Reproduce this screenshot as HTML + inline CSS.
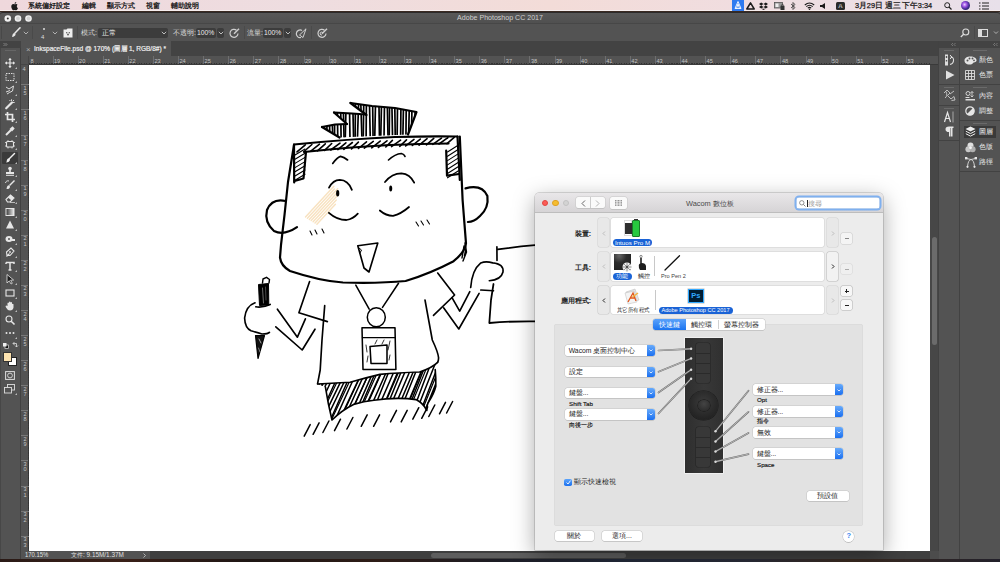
<!DOCTYPE html>
<html><head><meta charset="utf-8">
<style>
*{margin:0;padding:0;box-sizing:border-box}
html,body{width:1000px;height:562px;overflow:hidden;background:#3a2a22}
body{position:relative;font-family:"Liberation Sans",sans-serif;}
.a{position:absolute}
.t{position:absolute;white-space:nowrap}
svg{position:absolute;overflow:visible}
#menubar{left:0;top:0;width:1000px;height:11px;background:linear-gradient(90deg,#efd8dc 0%,#eedde0 30%,#f3dcd8 55%,#f0dde0 75%,#e8e0ea 100%);font-size:7.4px;color:#111;line-height:11px;border-bottom:1px solid #f6eeee;-webkit-text-stroke:0.25px #111}
#ps{left:0;top:12px;width:1000px;height:547px;background:#535353}
#title{left:0;top:12px;width:1000px;height:11px;background:linear-gradient(180deg,#585858,#505050);border-radius:3px 3px 0 0;border-top:1px solid #2c2a2a;color:#d0d0d0;font-size:7.05px;line-height:10px;text-align:center}
#opts{left:0;top:23px;width:1000px;height:18px;background:#535353;border-top:1px solid #474747}
#tabbar{left:21px;top:41px;width:917px;height:15px;background:#434343}
#tab{left:21px;top:41px;width:150px;height:15px;background:#535353;color:#e6e6e6;font-size:7.4px;line-height:15px}
#hruler{left:21px;top:56px;width:917px;height:9px;background:#535353;border-bottom:1px solid #3a3a3a}
#vruler{left:21px;top:56px;width:8px;height:495px;background:#535353;border-right:1px solid #3a3a3a}
#toolbar{left:0;top:41px;width:21px;height:518px;background:#535353;border-left:1px solid #474747;border-right:1px solid #404040}
#tbhead{left:0;top:41px;width:21px;height:7px;background:#434343}
#canvas{left:29px;top:65px;width:901px;height:486px;background:#fff;overflow:hidden}
#vscroll{left:930px;top:65px;width:9px;height:486px;background:#474747}
#status{left:21px;top:551px;width:917px;height:8px;background:#3f3f3f;font-size:6.4px;color:#e0e0e0;line-height:8px}
#panelstrip{left:938px;top:41px;width:62px;height:518px;background:#424242}
.pg{position:absolute;background:#535353}
.grip{position:absolute;height:1px;background:#6a6a6a}
.pl{position:absolute;font-size:6.5px;color:#e8e8e8;line-height:8px}
.rl{position:absolute;font-size:5.6px;color:#c4c4c4;line-height:6px}
#desk{left:0;top:559px;width:1000px;height:3px;background:linear-gradient(90deg,#2a1a16 0%,#3a2018 12%,#1e1614 25%,#2e1c16 38%,#1c1c24 50%,#232a3a 62%,#2a2c38 75%,#3a2a20 85%,#22202a 100%)}
.ob{position:absolute;background:#3c3c3c;border-radius:2px;color:#e8e8e8;font-size:7px;line-height:10px}
.ol{position:absolute;font-size:7px;color:#dcdcdc;line-height:10px;white-space:nowrap}

</style></head><body>
<div class="a" id="desk"></div>
<div class="a" id="ps"></div>
<div class="a" id="menubar">
 <svg style="left:11px;top:1.5px" width="7" height="8" viewBox="0 0 14 16"><path d="M11.6 8.5c0-2 1.6-2.9 1.7-3-1-1.4-2.4-1.5-2.9-1.6-1.2-.1-2.4.7-3 .7-.6 0-1.6-.7-2.6-.7C3.400 4 2 4.800 1.300 6.100c-1.500 2.600-.4 6.400 1 8.500.7 1 1.500 2.100 2.600 2.100 1 0 1.400-.7 2.700-.7 1.200 0 1.600.7 2.700.6 1.100 0 1.800-1 2.500-2.100.8-1.200 1.100-2.300 1.100-2.400 0 0-2.200-.8-2.300-3.600zM9.600 2.400c.6-.7 1-1.700.9-2.600-.8 0-1.800.5-2.400 1.200-.5.600-1 1.600-.9 2.500.9.1 1.800-.4 2.400-1.100z" fill="#1a1a1a"/></svg>
 <span class="t" style="left:28px">系統偏好設定</span>
 <span class="t" style="left:82px">編輯</span>
 <span class="t" style="left:107px">顯示方式</span>
 <span class="t" style="left:146px">視窗</span>
 <span class="t" style="left:171px">輔助說明</span>
 <div class="a" style="left:732px;top:0;width:12px;height:11px;background:#2f7bf0"></div>
 <svg style="left:734px;top:1px" width="8" height="9" viewBox="0 0 8 9"><path d="M4 0.5 L7 7.5 L1 7.5 Z M4 3 L5.5 7.5 M4 3 L2.5 7.5" stroke="#fff" stroke-width="0.9" fill="none"/></svg>
 <svg style="left:746px;top:2px" width="9" height="8" viewBox="0 0 9 8"><path d="M4.5 0.8 L8.2 7 L0.8 7 Z" stroke="#1a1a1a" stroke-width="1.5" fill="none" stroke-linejoin="round"/></svg>
 <svg style="left:759px;top:1.5px" width="9" height="8" viewBox="0 0 9 8"><path d="M2.2 0.5 L4.5 2 L2.2 3.5 L0 2 Z M6.8 0.5 L9 2 L6.8 3.5 L4.5 2 Z M2.2 3.5 L4.5 5 L6.8 3.5 L9 5 L6.8 6.5 L4.5 5 L2.2 6.5 L0 5Z M2.5 6.8 L4.5 8 L6.5 6.8" fill="#1a1a1a"/></svg>
 <svg style="left:774px;top:2px" width="11" height="8" viewBox="0 0 11 8"><rect x="0.5" y="0.5" width="8" height="5.5" fill="#999" stroke="#555" stroke-width="0.8"/><rect x="1.5" y="1.5" width="3" height="3.5" fill="#eee"/><rect x="6.5" y="4" width="4" height="4" fill="#333"/><path d="M7.3 4 V3 Q8.5 1.8 9.7 3 V4" stroke="#333" stroke-width="0.7" fill="none"/></svg>
 <svg style="left:790px;top:1.5px" width="6" height="8" viewBox="0 0 6 8"><path d="M1 2 L5 5.5 L3 7.5 L3 0.5 L5 2.5 L1 6" stroke="#333" stroke-width="0.8" fill="none"/></svg>
 <svg style="left:804px;top:2px" width="11" height="8" viewBox="0 0 11 8"><path d="M0.8 3 Q5.5 -1 10.2 3 M2.3 4.6 Q5.5 1.8 8.7 4.6 M3.8 6.1 Q5.5 4.6 7.2 6.1" stroke="#1a1a1a" stroke-width="1.1" fill="none"/><circle cx="5.5" cy="7.3" r="0.8" fill="#1a1a1a"/></svg>
 <svg style="left:820px;top:2.5px" width="6" height="6" viewBox="0 0 6 6"><path d="M0 2 L2 2 L5 0 L5 6 L2 4 L0 4Z" fill="#1a1a1a"/></svg>
 <div class="a" style="left:836px;top:1.5px;width:9px;height:8px;background:#2a2a2a;border-radius:1.5px;color:#fff;font-size:6px;line-height:8px;text-align:center;font-weight:bold">A</div>
 <span class="t" style="left:855px;font-size:7.6px;color:#222;transform:scaleX(0.968);transform-origin:0 50%">3月29日 週三 下午3:34</span>
 <svg style="left:944px;top:2px" width="8" height="8" viewBox="0 0 8 8"><circle cx="3.2" cy="3.2" r="2.5" stroke="#222" stroke-width="1" fill="none"/><path d="M5 5 L7.5 7.5" stroke="#222" stroke-width="1.2"/></svg>
 <div class="a" style="left:961px;top:1px;width:9px;height:9px;border-radius:50%;background:radial-gradient(circle at 40% 40%,#e9d0ff 0%,#9a50e0 30%,#3a2a8a 60%,#101040 100%)"></div>
 <svg style="left:979px;top:2px" width="10" height="8" viewBox="0 0 10 8"><path d="M0 1h1.5M0 4h1.5M0 7h1.5M3 1h7M3 4h7M3 7h7" stroke="#222" stroke-width="1.1"/></svg>
</div>
<div class="a" id="title">
 <svg style="left:2px;top:2.1px" width="35" height="8" viewBox="0 0 35 8"><circle cx="5.8" cy="3.5" r="3.3" fill="#f2f2f2"/><circle cx="5.8" cy="3.5" r="1" fill="#333"/><circle cx="16" cy="3.5" r="3.3" fill="#f0f0f0"/><circle cx="16" cy="3.5" r="1.9" fill="#d4d4d4"/><circle cx="26.5" cy="3.5" r="3.3" fill="#f0f0f0"/><circle cx="26.5" cy="3.5" r="1.9" fill="#d4d4d4"/></svg>
 Adobe Photoshop CC 2017</div>
<div class="a" id="opts">
 <div class="a" style="left:1px;top:2px;width:1px;height:13px;background:#484848"></div>
 <svg style="left:11px;top:3px" width="10" height="11" viewBox="0 0 10 11"><path d="M9 0.8 L4 6" stroke="#e8e8e8" stroke-width="1.6" stroke-linecap="round"/><path d="M3.6 6 C2 6 1.5 7.5 1.2 9.5 L1 10 C3 9.6 4.6 9 4.6 7 Z" fill="#e8e8e8"/></svg>
 <svg style="left:23px;top:7px" width="6" height="4" viewBox="0 0 6 4"><path d="M0.8 0.8 L3 3 L5.2 0.8" stroke="#bbb" stroke-width="0.9" fill="none"/></svg>
 <div class="a" style="left:32px;top:2px;width:1px;height:13px;background:#4a4a4a"></div>
 <div class="a" style="left:43px;top:4px;width:2px;height:2px;background:#ddd;border-radius:1px"></div>
 <span class="ol" style="left:41px;top:8px;font-size:6px">4</span>
 <svg style="left:52px;top:7px" width="6" height="4" viewBox="0 0 6 4"><path d="M0.8 0.8 L3 3 L5.2 0.8" stroke="#bbb" stroke-width="0.9" fill="none"/></svg>
 <svg style="left:63px;top:3.5px" width="10" height="10" viewBox="0 0 10 10"><path d="M0.5 1.5 L3.5 1.5 L4.5 0.5 L9.5 0.5 L9.5 9.5 L0.5 9.5Z" fill="#eee"/><path d="M3 4 L7 4 L5 8 Z" fill="#444"/><circle cx="5" cy="5" r="1" fill="#eee"/></svg>
 <div class="a" style="left:77px;top:2px;width:1px;height:13px;background:#4a4a4a"></div>
 <span class="ol" style="left:81px;top:3.5px">模式:</span>
 <div class="ob" style="left:98px;top:4px;width:70px;height:10px;padding-left:4px">正常
  <svg style="left:63px;top:3px" width="6" height="4" viewBox="0 0 6 4"><path d="M0.8 0.8 L3 3 L5.2 0.8" stroke="#ccc" stroke-width="0.9" fill="none"/></svg></div>
 <span class="ol" style="left:173px;top:3.5px">不透明:</span>
 <div class="ob" style="left:196px;top:4px;width:20px;height:10px;padding-left:1px;font-size:6.8px">100%</div>
 <div class="ob" style="left:217px;top:4px;width:7px;height:10px"><svg style="left:0.5px;top:3px" width="6" height="4" viewBox="0 0 6 4"><path d="M0.8 0.8 L3 3 L5.2 0.8" stroke="#ccc" stroke-width="0.9" fill="none"/></svg></div>
 <svg style="left:229px;top:3.5px" width="11" height="11" viewBox="0 0 11 11"><path d="M7.5 2.2 A4 4 0 1 0 9 5.5" stroke="#cfcfcf" stroke-width="1.2" fill="none"/><path d="M10 0.8 L5 5.8" stroke="#cfcfcf" stroke-width="1.4"/></svg>
 <div class="a" style="left:244px;top:2px;width:1px;height:13px;background:#4a4a4a"></div>
 <span class="ol" style="left:247px;top:3.5px">流量:</span>
 <div class="ob" style="left:263px;top:4px;width:20px;height:10px;padding-left:1px;font-size:6.8px">100%</div>
 <div class="ob" style="left:284px;top:4px;width:7px;height:10px"><svg style="left:0.5px;top:3px" width="6" height="4" viewBox="0 0 6 4"><path d="M0.8 0.8 L3 3 L5.2 0.8" stroke="#ccc" stroke-width="0.9" fill="none"/></svg></div>
 <svg style="left:296px;top:3.5px" width="11" height="11" viewBox="0 0 11 11"><path d="M6 2.5 A3.8 3.8 0 1 0 5 9.5" stroke="#cfcfcf" stroke-width="1.2" fill="none"/><path d="M10 0.8 L3.5 7 L7 9.5 Z" stroke="#cfcfcf" stroke-width="1" fill="none"/></svg>
 <div class="a" style="left:311px;top:2px;width:1px;height:13px;background:#4a4a4a"></div>
 <svg style="left:317px;top:3.5px" width="11" height="11" viewBox="0 0 11 11"><path d="M7.5 2.2 A4 4 0 1 0 9 5.5" stroke="#cfcfcf" stroke-width="1.2" fill="none"/><path d="M6 5 A1.5 1.5 0 1 0 5 7" stroke="#cfcfcf" stroke-width="1" fill="none"/><path d="M10 0.8 L5 5.8" stroke="#cfcfcf" stroke-width="1.4"/></svg>
 <svg style="left:960px;top:4px" width="10" height="10" viewBox="0 0 10 10"><circle cx="5.8" cy="4" r="3" stroke="#ddd" stroke-width="1.1" fill="none"/><path d="M3.6 6.2 L0.8 9" stroke="#ddd" stroke-width="1.3"/></svg>
 <div class="a" style="left:974px;top:2px;width:1px;height:13px;background:#4a4a4a"></div>
 <svg style="left:978px;top:5px" width="22" height="8" viewBox="0 0 22 8"><rect x="0.5" y="0.5" width="9" height="7" stroke="#ddd" stroke-width="1" fill="none"/><rect x="1" y="1" width="3" height="6" fill="#ddd"/><path d="M16 2.5 L18 4.5 L20 2.5" stroke="#bbb" stroke-width="0.9" fill="none"/></svg>
</div>
<div class="a" id="tabbar"></div>
<div class="a" id="tab"><span class="t" style="left:5px;top:1px;color:#aaa;font-size:8px">×</span><span class="t" style="left:13px;top:1px;font-size:7.1px;color:#f0f0f0;-webkit-text-stroke:0.2px #f0f0f0;transform:scaleX(0.923);transform-origin:0 50%">InkspaceFile.psd @ 170% (圖層 1, RGB/8#) *</span></div>
<div class="a" id="toolbar"></div>
<div class="a" id="tbhead"><svg style="left:3px;top:2px" width="5" height="3" viewBox="0 0 5 3"><path d="M0.5 0 L2 1.5 L0.5 3 M2.5 0 L4 1.5 L2.5 3" stroke="#aaa" stroke-width="0.6" fill="none"/></svg></div>
<div class="a" style="left:5px;top:50px;width:11px;height:1px;background:#666"></div>
<div class="a" id="hruler"></div>
<div class="a" id="vruler"></div>
<div class="a" id="vscroll"><div class="a" style="left:2px;top:172px;width:5px;height:108px;background:#6b6b6b;border-radius:3px"></div></div>
<div class="a" id="status">
 <div class="a" style="left:0;top:0;width:29px;height:8px;background:#535353"></div>
 <span class="t" style="left:4px;transform:scaleX(0.92);transform-origin:0 50%">170.15%</span>
 <div class="a" style="left:29px;top:0;width:100px;height:8px;background:#535353"></div>
 <span class="t" style="left:50px">文件: 9.15M/1.37M</span>
 <svg style="left:122px;top:2px" width="3" height="5" viewBox="0 0 3 5"><path d="M0.5 0.5 L2.5 2.5 L0.5 4.5" stroke="#ccc" stroke-width="0.8" fill="none"/></svg>
 <div class="a" style="left:410px;top:1.5px;width:195px;height:5px;background:#5e5e5e;border-radius:3px"></div>
</div>
<div class="a" id="panelstrip"></div>
<div class="a" style="left:52.5px;top:56px;width:1px;height:8px;background:#6e6e6e"></div>
<span class="rl" style="left:54.0px;top:58px">19</span>
<div class="a" style="left:77.6px;top:56px;width:1px;height:8px;background:#6e6e6e"></div>
<span class="rl" style="left:79.1px;top:58px">20</span>
<div class="a" style="left:102.7px;top:56px;width:1px;height:8px;background:#6e6e6e"></div>
<span class="rl" style="left:104.2px;top:58px">21</span>
<div class="a" style="left:127.8px;top:56px;width:1px;height:8px;background:#6e6e6e"></div>
<span class="rl" style="left:129.3px;top:58px">22</span>
<div class="a" style="left:152.9px;top:56px;width:1px;height:8px;background:#6e6e6e"></div>
<span class="rl" style="left:154.4px;top:58px">23</span>
<div class="a" style="left:178.0px;top:56px;width:1px;height:8px;background:#6e6e6e"></div>
<span class="rl" style="left:179.5px;top:58px">24</span>
<div class="a" style="left:203.1px;top:56px;width:1px;height:8px;background:#6e6e6e"></div>
<span class="rl" style="left:204.6px;top:58px">25</span>
<div class="a" style="left:228.2px;top:56px;width:1px;height:8px;background:#6e6e6e"></div>
<span class="rl" style="left:229.7px;top:58px">26</span>
<div class="a" style="left:253.3px;top:56px;width:1px;height:8px;background:#6e6e6e"></div>
<span class="rl" style="left:254.8px;top:58px">27</span>
<div class="a" style="left:278.4px;top:56px;width:1px;height:8px;background:#6e6e6e"></div>
<span class="rl" style="left:279.9px;top:58px">28</span>
<div class="a" style="left:303.5px;top:56px;width:1px;height:8px;background:#6e6e6e"></div>
<span class="rl" style="left:305.0px;top:58px">29</span>
<div class="a" style="left:328.6px;top:56px;width:1px;height:8px;background:#6e6e6e"></div>
<span class="rl" style="left:330.1px;top:58px">30</span>
<div class="a" style="left:353.7px;top:56px;width:1px;height:8px;background:#6e6e6e"></div>
<span class="rl" style="left:355.2px;top:58px">31</span>
<div class="a" style="left:378.8px;top:56px;width:1px;height:8px;background:#6e6e6e"></div>
<span class="rl" style="left:380.3px;top:58px">32</span>
<div class="a" style="left:403.9px;top:56px;width:1px;height:8px;background:#6e6e6e"></div>
<span class="rl" style="left:405.4px;top:58px">33</span>
<div class="a" style="left:429.0px;top:56px;width:1px;height:8px;background:#6e6e6e"></div>
<span class="rl" style="left:430.5px;top:58px">34</span>
<div class="a" style="left:454.1px;top:56px;width:1px;height:8px;background:#6e6e6e"></div>
<span class="rl" style="left:455.6px;top:58px">35</span>
<div class="a" style="left:479.2px;top:56px;width:1px;height:8px;background:#6e6e6e"></div>
<span class="rl" style="left:480.7px;top:58px">36</span>
<div class="a" style="left:504.3px;top:56px;width:1px;height:8px;background:#6e6e6e"></div>
<span class="rl" style="left:505.8px;top:58px">37</span>
<div class="a" style="left:529.4px;top:56px;width:1px;height:8px;background:#6e6e6e"></div>
<span class="rl" style="left:530.9px;top:58px">38</span>
<div class="a" style="left:554.5px;top:56px;width:1px;height:8px;background:#6e6e6e"></div>
<span class="rl" style="left:556.0px;top:58px">39</span>
<div class="a" style="left:579.6px;top:56px;width:1px;height:8px;background:#6e6e6e"></div>
<span class="rl" style="left:581.1px;top:58px">40</span>
<div class="a" style="left:604.7px;top:56px;width:1px;height:8px;background:#6e6e6e"></div>
<span class="rl" style="left:606.2px;top:58px">41</span>
<div class="a" style="left:629.8px;top:56px;width:1px;height:8px;background:#6e6e6e"></div>
<span class="rl" style="left:631.3px;top:58px">42</span>
<div class="a" style="left:654.9px;top:56px;width:1px;height:8px;background:#6e6e6e"></div>
<span class="rl" style="left:656.4px;top:58px">43</span>
<div class="a" style="left:680.0px;top:56px;width:1px;height:8px;background:#6e6e6e"></div>
<span class="rl" style="left:681.5px;top:58px">44</span>
<div class="a" style="left:705.1px;top:56px;width:1px;height:8px;background:#6e6e6e"></div>
<span class="rl" style="left:706.6px;top:58px">45</span>
<div class="a" style="left:730.2px;top:56px;width:1px;height:8px;background:#6e6e6e"></div>
<span class="rl" style="left:731.7px;top:58px">46</span>
<div class="a" style="left:755.3px;top:56px;width:1px;height:8px;background:#6e6e6e"></div>
<span class="rl" style="left:756.8px;top:58px">47</span>
<div class="a" style="left:780.4px;top:56px;width:1px;height:8px;background:#6e6e6e"></div>
<span class="rl" style="left:781.9px;top:58px">48</span>
<div class="a" style="left:805.5px;top:56px;width:1px;height:8px;background:#6e6e6e"></div>
<span class="rl" style="left:807.0px;top:58px">49</span>
<div class="a" style="left:830.6px;top:56px;width:1px;height:8px;background:#6e6e6e"></div>
<span class="rl" style="left:832.1px;top:58px">50</span>
<div class="a" style="left:855.7px;top:56px;width:1px;height:8px;background:#6e6e6e"></div>
<span class="rl" style="left:857.2px;top:58px">51</span>
<div class="a" style="left:880.8px;top:56px;width:1px;height:8px;background:#6e6e6e"></div>
<span class="rl" style="left:882.3px;top:58px">52</span>
<div class="a" style="left:905.9px;top:56px;width:1px;height:8px;background:#6e6e6e"></div>
<span class="rl" style="left:907.4px;top:58px">53</span>
<span class="rl" style="left:30.5px;top:58px">8</span>
<div class="a" style="left:29px;top:63px;width:901px;height:1px;background:repeating-linear-gradient(90deg,#333 0 1px,transparent 1px 2.5px)"></div>
<span class="rl" style="left:22.5px;top:66px">4</span>
<div class="a" style="left:21px;top:84.4px;width:8px;height:1px;background:#777"></div>
<span class="rl" style="left:22.5px;top:85.9px;width:5px;line-height:5.5px;text-align:center">1<br>5</span>
<div class="a" style="left:21px;top:109.4px;width:8px;height:1px;background:#777"></div>
<span class="rl" style="left:22.5px;top:110.9px;width:5px;line-height:5.5px;text-align:center">1<br>6</span>
<div class="a" style="left:21px;top:134.5px;width:8px;height:1px;background:#777"></div>
<span class="rl" style="left:22.5px;top:136.0px;width:5px;line-height:5.5px;text-align:center">1<br>7</span>
<div class="a" style="left:21px;top:159.6px;width:8px;height:1px;background:#777"></div>
<span class="rl" style="left:22.5px;top:161.1px;width:5px;line-height:5.5px;text-align:center">1<br>8</span>
<div class="a" style="left:21px;top:184.6px;width:8px;height:1px;background:#777"></div>
<span class="rl" style="left:22.5px;top:186.1px;width:5px;line-height:5.5px;text-align:center">1<br>9</span>
<div class="a" style="left:21px;top:209.7px;width:8px;height:1px;background:#777"></div>
<span class="rl" style="left:22.5px;top:211.2px;width:5px;line-height:5.5px;text-align:center">2<br>0</span>
<div class="a" style="left:21px;top:234.8px;width:8px;height:1px;background:#777"></div>
<span class="rl" style="left:22.5px;top:236.3px;width:5px;line-height:5.5px;text-align:center">2<br>1</span>
<div class="a" style="left:21px;top:259.9px;width:8px;height:1px;background:#777"></div>
<span class="rl" style="left:22.5px;top:261.4px;width:5px;line-height:5.5px;text-align:center">2<br>2</span>
<div class="a" style="left:21px;top:284.9px;width:8px;height:1px;background:#777"></div>
<span class="rl" style="left:22.5px;top:286.4px;width:5px;line-height:5.5px;text-align:center">2<br>3</span>
<div class="a" style="left:21px;top:310.0px;width:8px;height:1px;background:#777"></div>
<span class="rl" style="left:22.5px;top:311.5px;width:5px;line-height:5.5px;text-align:center">2<br>4</span>
<div class="a" style="left:21px;top:335.1px;width:8px;height:1px;background:#777"></div>
<span class="rl" style="left:22.5px;top:336.6px;width:5px;line-height:5.5px;text-align:center">2<br>5</span>
<div class="a" style="left:21px;top:360.1px;width:8px;height:1px;background:#777"></div>
<span class="rl" style="left:22.5px;top:361.6px;width:5px;line-height:5.5px;text-align:center">2<br>6</span>
<div class="a" style="left:21px;top:385.2px;width:8px;height:1px;background:#777"></div>
<span class="rl" style="left:22.5px;top:386.7px;width:5px;line-height:5.5px;text-align:center">2<br>7</span>
<div class="a" style="left:21px;top:410.3px;width:8px;height:1px;background:#777"></div>
<span class="rl" style="left:22.5px;top:411.8px;width:5px;line-height:5.5px;text-align:center">2<br>8</span>
<div class="a" style="left:21px;top:435.3px;width:8px;height:1px;background:#777"></div>
<span class="rl" style="left:22.5px;top:436.8px;width:5px;line-height:5.5px;text-align:center">2<br>9</span>
<div class="a" style="left:21px;top:460.4px;width:8px;height:1px;background:#777"></div>
<span class="rl" style="left:22.5px;top:461.9px;width:5px;line-height:5.5px;text-align:center">3<br>0</span>
<div class="a" style="left:21px;top:485.5px;width:8px;height:1px;background:#777"></div>
<span class="rl" style="left:22.5px;top:487.0px;width:5px;line-height:5.5px;text-align:center">3<br>1</span>
<div class="a" style="left:21px;top:510.6px;width:8px;height:1px;background:#777"></div>
<span class="rl" style="left:22.5px;top:512.1px;width:5px;line-height:5.5px;text-align:center">3<br>2</span>
<div class="a" style="left:21px;top:535.6px;width:8px;height:1px;background:#777"></div>
<span class="rl" style="left:22.5px;top:537.1px;width:5px;line-height:5.5px;text-align:center">3<br>3</span>
<div class="a" style="left:28px;top:65px;width:1px;height:486px;background:repeating-linear-gradient(180deg,#333 0 1px,transparent 1px 2.5px)"></div>
<div class="a" style="left:21px;top:56px;width:8px;height:9px;background:#535353;border-right:1px solid #464646;border-bottom:1px solid #464646"></div><div class="a" style="left:2px;top:151.5px;width:16px;height:12px;background:#3a3a3a;border-radius:1px"></div>
<svg style="left:4.5px;top:58.0px" width="10" height="10" viewBox="0 0 10 10"><path d="M5 0.5 V9.5 M0.5 5 H9.5" stroke="#e6e6e6" stroke-width="1.2"/><path d="M5 0 L3.3 2 H6.7Z M5 10 L3.3 8 H6.7Z M0 5 L2 3.3 V6.7Z M10 5 L8 3.3 V6.7Z" fill="#e6e6e6"/></svg>
<svg style="left:15px;top:67.0px" width="2" height="2" viewBox="0 0 2 2"><path d="M2 0 V2 H0Z" fill="#bbb"/></svg>
<svg style="left:4.5px;top:71.5px" width="10" height="10" viewBox="0 0 10 10"><rect x="1" y="1.5" width="8" height="7" stroke="#ddd" stroke-width="1" stroke-dasharray="1.5 1" fill="none"/></svg>
<svg style="left:15px;top:80.5px" width="2" height="2" viewBox="0 0 2 2"><path d="M2 0 V2 H0Z" fill="#bbb"/></svg>
<svg style="left:4.5px;top:85.0px" width="10" height="10" viewBox="0 0 10 10"><path d="M1 2 L4 4 L8.5 1 L7.5 6 L4.5 7.5 L2 9 M1 7 L5 5.5" stroke="#ddd" stroke-width="1" fill="none"/></svg>
<svg style="left:15px;top:94.0px" width="2" height="2" viewBox="0 0 2 2"><path d="M2 0 V2 H0Z" fill="#bbb"/></svg>
<svg style="left:4.5px;top:98.5px" width="10" height="10" viewBox="0 0 10 10"><path d="M1.2 9.3 L7 3.5" stroke="#e6e6e6" stroke-width="2.2" stroke-linecap="round"/><path d="M6.5 0.3 V2 M9.7 3.5 H8 M4.5 1 L5.3 2 M9 1 L8 2" stroke="#e6e6e6" stroke-width="0.9"/></svg>
<svg style="left:15px;top:107.5px" width="2" height="2" viewBox="0 0 2 2"><path d="M2 0 V2 H0Z" fill="#bbb"/></svg>
<svg style="left:4.5px;top:112.0px" width="10" height="10" viewBox="0 0 10 10"><path d="M2.5 0 V7.5 H10 M0 2.5 H7.5 V10" stroke="#e6e6e6" stroke-width="1.7" fill="none"/></svg>
<svg style="left:15px;top:121.0px" width="2" height="2" viewBox="0 0 2 2"><path d="M2 0 V2 H0Z" fill="#bbb"/></svg>
<svg style="left:4.5px;top:125.5px" width="10" height="10" viewBox="0 0 10 10"><path d="M1 9 L6 4" stroke="#e6e6e6" stroke-width="2"/><path d="M4.5 3 L7.5 0.3 L9.7 2.5 L7 5.5Z" fill="#e6e6e6"/></svg>
<svg style="left:15px;top:134.5px" width="2" height="2" viewBox="0 0 2 2"><path d="M2 0 V2 H0Z" fill="#bbb"/></svg>
<svg style="left:4.5px;top:139.0px" width="10" height="10" viewBox="0 0 10 10"><rect x="1.5" y="2.5" width="7" height="5.5" rx="1" stroke="#e6e6e6" stroke-width="1.1" fill="none"/><path d="M0 3.5 H1.5 M0 7 H1.5 M8.5 3.5 H10 M8.5 7 H10 M3 1 V2.5 M7 1 V2.5 M3 8 V9.5 M7 8 V9.5" stroke="#e6e6e6" stroke-width="0.8"/></svg>
<svg style="left:15px;top:148.0px" width="2" height="2" viewBox="0 0 2 2"><path d="M2 0 V2 H0Z" fill="#bbb"/></svg>
<svg style="left:4.5px;top:152.5px" width="10" height="10" viewBox="0 0 10 10"><path d="M9.5 0.5 L4.5 5.5" stroke="#f0f0f0" stroke-width="1.5" stroke-linecap="round"/><path d="M4 5.3 C2.5 5.3 1.8 6.8 1.5 9 L1 9.6 C3.2 9.2 5 8.6 5 6.5Z" fill="#f0f0f0"/></svg>
<svg style="left:15px;top:161.5px" width="2" height="2" viewBox="0 0 2 2"><path d="M2 0 V2 H0Z" fill="#bbb"/></svg>
<svg style="left:4.5px;top:166.0px" width="10" height="10" viewBox="0 0 10 10"><circle cx="5" cy="2.5" r="1.8" fill="#e6e6e6"/><path d="M4.2 4 H5.8 V6 H9 V8 H1 V6 H4.2Z" fill="#e6e6e6"/><rect x="1" y="8.8" width="8" height="1" fill="#e6e6e6"/></svg>
<svg style="left:15px;top:175.0px" width="2" height="2" viewBox="0 0 2 2"><path d="M2 0 V2 H0Z" fill="#bbb"/></svg>
<svg style="left:4.5px;top:179.5px" width="10" height="10" viewBox="0 0 10 10"><path d="M9.5 0.5 L4.5 5.5" stroke="#e6e6e6" stroke-width="1.4"/><path d="M4 5.3 C2.5 5.3 1.8 6.8 1.5 9 C3.2 9.2 5 8.6 5 6.5Z" fill="#e6e6e6"/><path d="M0.5 3 A2.5 2.5 0 0 1 4 1" stroke="#e6e6e6" stroke-width="0.9" fill="none"/></svg>
<svg style="left:15px;top:188.5px" width="2" height="2" viewBox="0 0 2 2"><path d="M2 0 V2 H0Z" fill="#bbb"/></svg>
<svg style="left:4.5px;top:193.0px" width="10" height="10" viewBox="0 0 10 10"><path d="M1 6.5 L5.5 2 L9 5 L5 9 H2.5Z" stroke="#e6e6e6" stroke-width="1.1" fill="none"/><path d="M3 4.5 L6.5 7.5 L9 5 L5.5 2Z" fill="#e6e6e6"/><path d="M5 9.5 H10" stroke="#e6e6e6" stroke-width="0.7"/></svg>
<svg style="left:15px;top:202.0px" width="2" height="2" viewBox="0 0 2 2"><path d="M2 0 V2 H0Z" fill="#bbb"/></svg>
<svg style="left:4.5px;top:206.5px" width="10" height="10" viewBox="0 0 10 10"><defs><linearGradient id="gg"><stop offset="0" stop-color="#333"/><stop offset="1" stop-color="#eee"/></linearGradient></defs><rect x="1" y="1.5" width="8" height="7" fill="url(#gg)" stroke="#e6e6e6" stroke-width="1"/></svg>
<svg style="left:15px;top:215.5px" width="2" height="2" viewBox="0 0 2 2"><path d="M2 0 V2 H0Z" fill="#bbb"/></svg>
<svg style="left:4.5px;top:220.0px" width="10" height="10" viewBox="0 0 10 10"><path d="M5 0.5 L9 8.5 H1Z" fill="#e6e6e6"/></svg>
<svg style="left:15px;top:229.0px" width="2" height="2" viewBox="0 0 2 2"><path d="M2 0 V2 H0Z" fill="#bbb"/></svg>
<svg style="left:4.5px;top:233.5px" width="10" height="10" viewBox="0 0 10 10"><ellipse cx="4" cy="5" rx="3.5" ry="3" fill="#e6e6e6"/><path d="M7 5 H10 V7 H7" fill="#e6e6e6"/><circle cx="4" cy="5" r="1" fill="#535353"/></svg>
<svg style="left:15px;top:242.5px" width="2" height="2" viewBox="0 0 2 2"><path d="M2 0 V2 H0Z" fill="#bbb"/></svg>
<svg style="left:4.5px;top:247.0px" width="10" height="10" viewBox="0 0 10 10"><path d="M2 8.5 L1.5 5 L6 1 L9 4 L5 8.5Z M1.5 9.5 L4.5 6.5" stroke="#e6e6e6" stroke-width="1.1" fill="none"/><circle cx="5" cy="5" r="0.9" fill="#e6e6e6"/></svg>
<svg style="left:15px;top:256.0px" width="2" height="2" viewBox="0 0 2 2"><path d="M2 0 V2 H0Z" fill="#bbb"/></svg>
<svg style="left:4.5px;top:260.5px" width="10" height="10" viewBox="0 0 10 10"><path d="M1 1.5 H9 V3 M1 1.5 V3 M5 1.5 V9 M3.5 9 H6.5" stroke="#e6e6e6" stroke-width="1.5" fill="none"/></svg>
<svg style="left:15px;top:269.5px" width="2" height="2" viewBox="0 0 2 2"><path d="M2 0 V2 H0Z" fill="#bbb"/></svg>
<svg style="left:4.5px;top:274.0px" width="10" height="10" viewBox="0 0 10 10"><path d="M2 0.5 L2 9 L4.3 6.8 L6 10 L7.3 9.3 L5.6 6.2 L8.6 6Z" fill="#1e1e1e" stroke="#e6e6e6" stroke-width="0.8"/></svg>
<svg style="left:15px;top:283.0px" width="2" height="2" viewBox="0 0 2 2"><path d="M2 0 V2 H0Z" fill="#bbb"/></svg>
<svg style="left:4.5px;top:287.5px" width="10" height="10" viewBox="0 0 10 10"><rect x="1" y="2" width="8" height="6" stroke="#e6e6e6" stroke-width="1.1" fill="none"/></svg>
<svg style="left:15px;top:296.5px" width="2" height="2" viewBox="0 0 2 2"><path d="M2 0 V2 H0Z" fill="#bbb"/></svg>
<svg style="left:4.5px;top:301.0px" width="10" height="10" viewBox="0 0 10 10"><path d="M2.5 4 V2 Q3.2 1 4 2 V1 Q4.8 0 5.5 1 V1.5 Q6.3 0.6 7 1.6 V3 Q7.8 2.2 8.5 3.2 V6.5 Q8 9.5 5 9.5 Q2.5 9.5 1 6.5 L0.5 5 Q1.3 4 2.5 5Z" fill="#e6e6e6"/></svg>
<svg style="left:15px;top:310.0px" width="2" height="2" viewBox="0 0 2 2"><path d="M2 0 V2 H0Z" fill="#bbb"/></svg>
<svg style="left:4.5px;top:314.5px" width="10" height="10" viewBox="0 0 10 10"><circle cx="4" cy="4" r="3" stroke="#e6e6e6" stroke-width="1.1" fill="none"/><path d="M6.2 6.2 L9.5 9.5" stroke="#e6e6e6" stroke-width="1.6"/></svg>
<svg style="left:4.5px;top:328.0px" width="10" height="10" viewBox="0 0 10 10"><circle cx="1.5" cy="5" r="1" fill="#e6e6e6"/><circle cx="5" cy="5" r="1" fill="#e6e6e6"/><circle cx="8.5" cy="5" r="1" fill="#e6e6e6"/></svg>
<svg style="left:15px;top:337.0px" width="2" height="2" viewBox="0 0 2 2"><path d="M2 0 V2 H0Z" fill="#bbb"/></svg>
<svg style="left:2px;top:342px" width="18" height="8" viewBox="0 0 18 8"><rect x="3" y="3" width="3.5" height="3.5" fill="#111" stroke="#ddd" stroke-width="0.7"/><rect x="1" y="1" width="3.5" height="3.5" fill="#eee"/><path d="M11 1.5 H14.5 V5 M12.5 0 L11 1.5 L12.5 3 M13 3.5 L14.5 5 L16 3.5" stroke="#ddd" stroke-width="0.8" fill="none"/></svg>
<div class="a" style="left:8px;top:356.5px;width:9px;height:9.5px;background:#fff;border:0.5px solid #222"></div>
<div class="a" style="left:2.5px;top:352px;width:9px;height:9.5px;background:#fde3b0;border:0.5px solid #333"></div>
<svg style="left:4.5px;top:371px" width="10" height="9" viewBox="0 0 10 9"><rect x="0.6" y="0.6" width="8.8" height="7.8" stroke="#ddd" stroke-width="1" fill="none"/><circle cx="5" cy="4.5" r="2.4" stroke="#ddd" stroke-width="0.9" fill="none"/></svg>
<svg style="left:4px;top:384px" width="12" height="10" viewBox="0 0 12 10"><rect x="3.5" y="0.5" width="7" height="5.5" stroke="#ddd" stroke-width="0.9" fill="none"/><rect x="0.5" y="3.5" width="7" height="5.5" fill="#535353" stroke="#ddd" stroke-width="0.9"/></svg>
<svg style="left:15px;top:393px" width="2" height="2" viewBox="0 0 2 2"><path d="M2 0 V2 H0Z" fill="#bbb"/></svg><div class="a" style="left:939px;top:41px;width:61px;height:7px;background:#434343"></div>
<svg style="left:951px;top:43px" width="5" height="3" viewBox="0 0 5 3"><path d="M2 0 L0.5 1.5 L2 3 M4.5 0 L3 1.5 L4.5 3" stroke="#999" stroke-width="0.6" fill="none"/></svg>
<svg style="left:993px;top:43px" width="5" height="3" viewBox="0 0 5 3"><path d="M2 0 L0.5 1.5 L2 3 M4.5 0 L3 1.5 L4.5 3" stroke="#999" stroke-width="0.6" fill="none"/></svg>
<div class="pg" style="left:939px;top:48px;width:20px;height:35.5px"></div>
<div class="pg" style="left:939px;top:84.5px;width:20px;height:20.5px"></div>
<div class="pg" style="left:939px;top:106px;width:20px;height:34px"></div>
<div class="pg" style="left:939px;top:141px;width:20px;height:418px"></div>
<div class="pg" style="left:960px;top:48px;width:40px;height:35.5px"></div>
<div class="pg" style="left:960px;top:84.5px;width:40px;height:35.5px"></div>
<div class="pg" style="left:960px;top:121px;width:40px;height:50px"></div>
<div class="pg" style="left:960px;top:172px;width:40px;height:387px"></div>
<div class="grip" style="left:944px;top:50px;width:10px"></div>
<div class="grip" style="left:944px;top:86.5px;width:10px"></div>
<div class="grip" style="left:944px;top:108px;width:10px"></div>
<div class="grip" style="left:973px;top:50px;width:14px"></div>
<div class="grip" style="left:973px;top:86.5px;width:14px"></div>
<div class="grip" style="left:973px;top:123px;width:14px"></div>
<!-- strip icons -->
<svg style="left:944px;top:54px" width="11" height="12" viewBox="0 0 11 12"><rect x="1" y="0.5" width="3" height="11" fill="#ddd"/><rect x="1.8" y="2" width="1.4" height="2" fill="#535353"/><rect x="1.8" y="6" width="1.4" height="1.5" fill="#535353"/><path d="M6.5 3 Q10 3 9.5 7 Q9 10 6 10.5" stroke="#ddd" stroke-width="1.1" fill="none"/><path d="M6 1 L8 3 L6 5" stroke="#ddd" stroke-width="1" fill="none"/></svg>
<svg style="left:945px;top:70px" width="10" height="10" viewBox="0 0 10 10"><path d="M1 0.5 L9.5 5 L1 9.5Z" fill="#e0e0e0"/></svg>
<svg style="left:943px;top:89px" width="13" height="12" viewBox="0 0 13 12"><path d="M1 4 L4 1 L7 4 L4.5 6.5 L8 10 L11 7.5 L12 11 L8.5 11.5 M3 2.5 Q5 7 2 9 M7 5 L11 2" stroke="#ccc" stroke-width="0.9" fill="none"/></svg>
<svg style="left:944px;top:111px" width="11" height="12" viewBox="0 0 11 12"><path d="M0.5 11 L3.5 1.5 L6.5 11 M1.6 7.5 H5.4" stroke="#e6e6e6" stroke-width="1.2" fill="none"/><path d="M9 0.5 V11.5" stroke="#ccc" stroke-width="0.7"/></svg>
<svg style="left:945px;top:126px" width="9" height="11" viewBox="0 0 9 11"><path d="M4 0.5 H8.5 V2 H7.5 V10.5 H6 V2 H5.5 V10.5 H4 V6 Q0.5 6 0.5 3.2 Q0.5 0.5 4 0.5Z" fill="#e6e6e6"/></svg>
<!-- right panel -->
<svg style="left:964px;top:56px" width="13" height="9" viewBox="0 0 13 9"><path d="M6.5 0.5 C11 0.5 13 3 12.5 5 C12 6.5 9.5 6 9 7 C8.5 8.5 7 8.5 5.5 8.5 C2 8.5 0.5 6.5 0.5 4.5 C0.5 2 3 0.5 6.5 0.5Z" fill="#e6e6e6"/><circle cx="3.5" cy="4.5" r="1" fill="#535353"/><circle cx="5.5" cy="2.5" r="1" fill="#535353"/><circle cx="8.5" cy="2.5" r="1" fill="#535353"/><circle cx="10" cy="4.3" r="0.9" fill="#535353"/></svg>
<span class="pl" style="left:979px;top:56px">顏色</span>
<svg style="left:965px;top:70px" width="10" height="10" viewBox="0 0 10 10"><path d="M0.5 0.5 H9.5 V9.5 H0.5Z M3.5 0.5 V9.5 M6.5 0.5 V9.5 M0.5 3.5 H9.5 M0.5 6.5 H9.5" stroke="#ddd" stroke-width="0.9" fill="none"/></svg>
<span class="pl" style="left:979px;top:71px">色票</span>
<svg style="left:965px;top:91px" width="10" height="10" viewBox="0 0 10 10"><circle cx="3" cy="2.5" r="2" stroke="#ddd" stroke-width="0.9" fill="none"/><path d="M7 0.5 V6 M5.5 2 L7 0.5 L8.5 2 M5.5 4.5 L7 6 L8.5 4.5" stroke="#ddd" stroke-width="0.8" fill="none"/><rect x="0.5" y="6" width="4" height="1" fill="#ddd"/><rect x="0.5" y="8" width="9.5" height="1.5" fill="#ddd"/></svg>
<span class="pl" style="left:979px;top:92px">內容</span>
<svg style="left:965px;top:106px" width="10" height="10" viewBox="0 0 10 10"><circle cx="5" cy="5" r="4.2" stroke="#e6e6e6" stroke-width="1.2" fill="none"/><path d="M8 2 A4.2 4.2 0 0 1 2 8Z" fill="#e6e6e6"/></svg>
<span class="pl" style="left:979px;top:107px">調整</span>
<div class="a" style="left:964px;top:126px;width:32px;height:11.5px;background:#3a3a3a"></div>
<svg style="left:965px;top:126px" width="11" height="11" viewBox="0 0 11 11"><path d="M5.5 0.5 L10.5 3 L5.5 5.5 L0.5 3Z" fill="#eee"/><path d="M0.8 5.2 L5.5 7.6 L10.2 5.2 M0.8 7.7 L5.5 10.1 L10.2 7.7" stroke="#eee" stroke-width="1" fill="none"/></svg>
<span class="pl" style="left:979px;top:127.5px;color:#fff">圖層</span>
<svg style="left:965px;top:142px" width="11" height="11" viewBox="0 0 11 11"><circle cx="5.5" cy="3.6" r="3" fill="#e0e0e0"/><circle cx="3.4" cy="7.2" r="3" fill="#c8c8c8"/><circle cx="7.6" cy="7.2" r="3" fill="#b0b0b0"/><circle cx="5.5" cy="5.8" r="1.4" fill="#f4f4f4"/></svg>
<span class="pl" style="left:979px;top:143px">色版</span>
<svg style="left:964.5px;top:157px" width="12" height="11" viewBox="0 0 12 11"><path d="M2.5 10 Q3 3 6 2.5 Q9 3 9.5 10 M1.5 1.5 L6 2.5 L10.5 1.5" stroke="#ddd" stroke-width="0.9" fill="none"/><rect x="0" y="0" width="2.4" height="2.4" fill="#e6e6e6"/><rect x="9.6" y="0" width="2.4" height="2.4" fill="#e6e6e6"/><circle cx="2.5" cy="9.8" r="1.1" fill="#e6e6e6"/><circle cx="9.5" cy="9.8" r="1.1" fill="#e6e6e6"/></svg>
<span class="pl" style="left:979px;top:158px">路徑</span>
<div class="a" style="left:930px;top:551px;width:8.5px;height:8px;background:#4c4c4c"></div>
<div class="a" id="canvas"><svg style="left:-29px;top:-65px" width="1000" height="562" viewBox="0 0 1000 562"><path d="M305.5 217.0L333.9 186.3" stroke="#f8e2c0" stroke-width="1.4" stroke-linecap="round"/><path d="M307.4 218.2L334.4 189.0" stroke="#f8e2c0" stroke-width="1.4" stroke-linecap="round"/><path d="M309.3 219.4L337.7 188.7" stroke="#f8e2c0" stroke-width="1.4" stroke-linecap="round"/><path d="M311.2 220.6L336.8 193.0" stroke="#f8e2c0" stroke-width="1.4" stroke-linecap="round"/><path d="M313.1 221.8L337.2 195.7" stroke="#f8e2c0" stroke-width="1.4" stroke-linecap="round"/><path d="M315.0 223.0L336.3 200.0" stroke="#f8e2c0" stroke-width="1.4" stroke-linecap="round"/><path d="M316.9 224.2L335.4 204.2" stroke="#f8e2c0" stroke-width="1.4" stroke-linecap="round"/><path d="M350.5 103 L372 106 L395 108 L416.5 112 L408 134.5" stroke="#000" stroke-width="2.20" fill="none" stroke-linecap="round" stroke-linejoin="round" /><path d="M350.5 103 L366.5 115" stroke="#000" stroke-width="2.20" fill="none" stroke-linecap="round" stroke-linejoin="round" /><path d="M334 112.5 L352 113.5 L366 114.5" stroke="#000" stroke-width="2.20" fill="none" stroke-linecap="round" stroke-linejoin="round" /><path d="M334 112.5 L347 124" stroke="#000" stroke-width="2.20" fill="none" stroke-linecap="round" stroke-linejoin="round" /><path d="M322 127 L335 124.5 L347 124" stroke="#000" stroke-width="2.20" fill="none" stroke-linecap="round" stroke-linejoin="round" /><path d="M322 127 L339.5 137.5" stroke="#000" stroke-width="2.20" fill="none" stroke-linecap="round" stroke-linejoin="round" /><clipPath id="hc"><path d="M350.5 103 L372 106 L395 108 L416.5 112 L408 134.5 L339.5 137.5 L322 127 L335 124.5 L347 124 L334 112.5 L352 113.5 L366 114.5 Z"/></clipPath><g clip-path="url(#hc)"><path d="M323.8 100.0L324.1 140.0" stroke="#000" stroke-width="1.7" stroke-linecap="round"/><path d="M326.8 100.0L327.0 140.0" stroke="#000" stroke-width="1.7" stroke-linecap="round"/><path d="M328.8 100.0L330.0 140.0" stroke="#000" stroke-width="1.7" stroke-linecap="round"/><path d="M331.5 100.0L332.9 140.0" stroke="#000" stroke-width="1.7" stroke-linecap="round"/><path d="M334.8 100.0L334.5 140.0" stroke="#000" stroke-width="1.7" stroke-linecap="round"/><path d="M337.2 100.0L337.8 140.0" stroke="#000" stroke-width="1.7" stroke-linecap="round"/><path d="M340.6 100.0L341.1 140.0" stroke="#000" stroke-width="1.7" stroke-linecap="round"/><path d="M343.1 100.0L344.1 140.0" stroke="#000" stroke-width="1.7" stroke-linecap="round"/><path d="M346.2 100.0L345.2 140.0" stroke="#000" stroke-width="1.7" stroke-linecap="round"/><path d="M349.4 100.0L350.0 140.0" stroke="#000" stroke-width="1.7" stroke-linecap="round"/><path d="M352.7 100.0L353.6 140.0" stroke="#000" stroke-width="1.7" stroke-linecap="round"/><path d="M355.5 100.0L355.1 140.0" stroke="#000" stroke-width="1.7" stroke-linecap="round"/><path d="M358.7 100.0L357.4 140.0" stroke="#000" stroke-width="1.7" stroke-linecap="round"/><path d="M360.7 100.0L362.0 140.0" stroke="#000" stroke-width="1.7" stroke-linecap="round"/><path d="M363.8 100.0L363.2 140.0" stroke="#000" stroke-width="1.7" stroke-linecap="round"/><path d="M366.4 100.0L366.1 140.0" stroke="#000" stroke-width="1.7" stroke-linecap="round"/><path d="M369.4 100.0L370.3 140.0" stroke="#000" stroke-width="1.7" stroke-linecap="round"/><path d="M372.6 100.0L373.1 140.0" stroke="#000" stroke-width="1.7" stroke-linecap="round"/><path d="M375.6 100.0L374.7 140.0" stroke="#000" stroke-width="1.7" stroke-linecap="round"/><path d="M378.9 100.0L379.5 140.0" stroke="#000" stroke-width="1.7" stroke-linecap="round"/><path d="M381.6 100.0L380.7 140.0" stroke="#000" stroke-width="1.7" stroke-linecap="round"/><path d="M384.5 100.0L384.0 140.0" stroke="#000" stroke-width="1.7" stroke-linecap="round"/><path d="M387.2 100.0L388.1 140.0" stroke="#000" stroke-width="1.7" stroke-linecap="round"/><path d="M389.6 100.0L389.2 140.0" stroke="#000" stroke-width="1.7" stroke-linecap="round"/><path d="M391.8 100.0L392.6 140.0" stroke="#000" stroke-width="1.7" stroke-linecap="round"/><path d="M394.7 100.0L395.3 140.0" stroke="#000" stroke-width="1.7" stroke-linecap="round"/><path d="M397.6 100.0L397.1 140.0" stroke="#000" stroke-width="1.7" stroke-linecap="round"/><path d="M401.0 100.0L400.6 140.0" stroke="#000" stroke-width="1.7" stroke-linecap="round"/><path d="M403.6 100.0L402.8 140.0" stroke="#000" stroke-width="1.7" stroke-linecap="round"/><path d="M406.3 100.0L405.9 140.0" stroke="#000" stroke-width="1.7" stroke-linecap="round"/><path d="M409.5 100.0L408.5 140.0" stroke="#000" stroke-width="1.7" stroke-linecap="round"/><path d="M412.1 100.0L411.4 140.0" stroke="#000" stroke-width="1.7" stroke-linecap="round"/><path d="M415.3 100.0L414.7 140.0" stroke="#000" stroke-width="1.7" stroke-linecap="round"/></g><path d="M294 144.5 Q350 139 395 137 Q430 136 457.5 136.5" stroke="#000" stroke-width="2.20" fill="none" stroke-linecap="round" stroke-linejoin="round" /><path d="M304 152 Q350 147 390 145 Q420 143.5 448.5 143.5" stroke="#000" stroke-width="2.20" fill="none" stroke-linecap="round" stroke-linejoin="round" /><path d="M297.0 151.9L305.3 144.8" stroke="#000" stroke-width="1.6" stroke-linecap="round"/><path d="M304.0 151.5L311.9 144.5" stroke="#000" stroke-width="1.6" stroke-linecap="round"/><path d="M310.8 151.1L319.5 144.2" stroke="#000" stroke-width="1.6" stroke-linecap="round"/><path d="M317.4 150.8L325.3 143.8" stroke="#000" stroke-width="1.6" stroke-linecap="round"/><path d="M324.6 150.4L331.7 143.5" stroke="#000" stroke-width="1.6" stroke-linecap="round"/><path d="M330.7 150.0L340.0 143.2" stroke="#000" stroke-width="1.6" stroke-linecap="round"/><path d="M337.8 149.6L345.9 142.8" stroke="#000" stroke-width="1.6" stroke-linecap="round"/><path d="M343.8 149.3L352.4 142.5" stroke="#000" stroke-width="1.6" stroke-linecap="round"/><path d="M351.5 148.9L358.4 142.1" stroke="#000" stroke-width="1.6" stroke-linecap="round"/><path d="M358.4 148.5L366.5 141.8" stroke="#000" stroke-width="1.6" stroke-linecap="round"/><path d="M364.3 148.1L373.3 141.4" stroke="#000" stroke-width="1.6" stroke-linecap="round"/><path d="M371.7 147.8L380.2 141.1" stroke="#000" stroke-width="1.6" stroke-linecap="round"/><path d="M378.4 147.4L387.0 140.8" stroke="#000" stroke-width="1.6" stroke-linecap="round"/><path d="M385.8 147.0L392.4 140.4" stroke="#000" stroke-width="1.6" stroke-linecap="round"/><path d="M391.5 146.6L400.6 140.1" stroke="#000" stroke-width="1.6" stroke-linecap="round"/><path d="M399.7 146.3L406.5 139.8" stroke="#000" stroke-width="1.6" stroke-linecap="round"/><path d="M405.7 145.9L414.0 139.4" stroke="#000" stroke-width="1.6" stroke-linecap="round"/><path d="M412.3 145.5L420.3 139.1" stroke="#000" stroke-width="1.6" stroke-linecap="round"/><path d="M419.1 145.2L427.1 138.7" stroke="#000" stroke-width="1.6" stroke-linecap="round"/><path d="M426.4 144.8L433.8 138.4" stroke="#000" stroke-width="1.6" stroke-linecap="round"/><path d="M432.8 144.4L441.5 138.1" stroke="#000" stroke-width="1.6" stroke-linecap="round"/><path d="M439.0 144.0L447.9 137.7" stroke="#000" stroke-width="1.6" stroke-linecap="round"/><path d="M447.0 143.7L454.2 137.4" stroke="#000" stroke-width="1.6" stroke-linecap="round"/><path d="M294 144.5 L294.2 182.5" stroke="#000" stroke-width="2.20" fill="none" stroke-linecap="round" stroke-linejoin="round" /><path d="M306 152 L303.5 178.5 L294.5 181" stroke="#000" stroke-width="2.20" fill="none" stroke-linecap="round" stroke-linejoin="round" /><path d="M295.0 155.0L305.0 149.0" stroke="#000" stroke-width="1.1" stroke-linecap="round"/><path d="M295.0 159.2L305.0 153.2" stroke="#000" stroke-width="1.1" stroke-linecap="round"/><path d="M295.0 163.4L305.0 157.4" stroke="#000" stroke-width="1.1" stroke-linecap="round"/><path d="M295.0 167.6L305.0 161.6" stroke="#000" stroke-width="1.1" stroke-linecap="round"/><path d="M295.0 171.8L305.0 165.8" stroke="#000" stroke-width="1.1" stroke-linecap="round"/><path d="M295.0 176.0L305.0 170.0" stroke="#000" stroke-width="1.1" stroke-linecap="round"/><path d="M295.0 180.2L305.0 174.2" stroke="#000" stroke-width="1.1" stroke-linecap="round"/><path d="M457.5 136.5 L459.8 180" stroke="#000" stroke-width="2.20" fill="none" stroke-linecap="round" stroke-linejoin="round" /><path d="M446.2 150.7 L447 175.6 L459 174" stroke="#000" stroke-width="2.20" fill="none" stroke-linecap="round" stroke-linejoin="round" /><path d="M447.5 152.0L458.5 145.0" stroke="#000" stroke-width="1.1" stroke-linecap="round"/><path d="M447.5 156.3L458.5 149.3" stroke="#000" stroke-width="1.1" stroke-linecap="round"/><path d="M447.5 160.6L458.5 153.6" stroke="#000" stroke-width="1.1" stroke-linecap="round"/><path d="M447.5 164.9L458.5 157.9" stroke="#000" stroke-width="1.1" stroke-linecap="round"/><path d="M447.5 169.2L458.5 162.2" stroke="#000" stroke-width="1.1" stroke-linecap="round"/><path d="M447.5 173.5L458.5 166.5" stroke="#000" stroke-width="1.1" stroke-linecap="round"/><path d="M447.5 177.8L458.5 170.8" stroke="#000" stroke-width="1.1" stroke-linecap="round"/><path d="M294 145 L288 182 L284.5 215 L281 245 L280 257.5 Q281 266 290 271 Q320 281 343 282.5 Q380 283.5 405.6 281 Q430 273.6 453.6 261.2 Q465 252 466 243.4 L462.6 200 L459.8 136.5" stroke="#000" stroke-width="2.20" fill="none" stroke-linecap="round" stroke-linejoin="round" /><path d="M465 243 L466.5 252 L463 261 M464 246 L462 258 M466 248 L464.5 256" stroke="#000" stroke-width="1.43" fill="none" stroke-linecap="round" stroke-linejoin="round" /><path d="M285.6 201 Q272 198 267 210 Q264 222 274 231 Q284 236 297 227.2" stroke="#000" stroke-width="2.20" fill="none" stroke-linecap="round" stroke-linejoin="round" /><path d="M465.5 188.4 Q482 184 487.4 196 Q489 208 480 216 Q474 222 467.9 222" stroke="#000" stroke-width="2.20" fill="none" stroke-linecap="round" stroke-linejoin="round" /><path d="M332.7 163.5 Q337 157.5 340.5 156.4 Q344 157 347.6 160" stroke="#000" stroke-width="1.65" fill="none" stroke-linecap="round" stroke-linejoin="round" /><path d="M388.5 160 Q395 154 401.4 153.5 Q404 154 405 156.4" stroke="#000" stroke-width="1.65" fill="none" stroke-linecap="round" stroke-linejoin="round" /><path d="M329 187.7 Q333 180 339.8 179.9 Q348 180 351.9 189.8" stroke="#000" stroke-width="1.76" fill="none" stroke-linecap="round" stroke-linejoin="round" /><path d="M385 182 Q392 173.5 401.4 173.4 Q410 174 414.2 182.7" stroke="#000" stroke-width="1.76" fill="none" stroke-linecap="round" stroke-linejoin="round" /><ellipse cx="337.7" cy="193.3" rx="1.6" ry="3.2" fill="#000"/><ellipse cx="390.7" cy="188.6" rx="1.5" ry="3" fill="#000"/><path d="M328.9 212.8 Q337 220 346.5 220 Q353 219 357.8 213.6" stroke="#000" stroke-width="1.76" fill="none" stroke-linecap="round" stroke-linejoin="round" /><path d="M379.8 210.5 Q386 215.8 393 215.8 Q401 214 409 207" stroke="#000" stroke-width="1.76" fill="none" stroke-linecap="round" stroke-linejoin="round" /><path d="M310.0 231.0L312.0 235.0" stroke="#000" stroke-width="1.1" stroke-linecap="round"/><path d="M315.0 230.0L317.0 234.0" stroke="#000" stroke-width="1.1" stroke-linecap="round"/><path d="M322.0 229.0L324.0 233.0" stroke="#000" stroke-width="1.1" stroke-linecap="round"/><path d="M416.0 222.0L418.5 226.0" stroke="#000" stroke-width="1.1" stroke-linecap="round"/><path d="M421.0 221.0L423.5 225.0" stroke="#000" stroke-width="1.1" stroke-linecap="round"/><path d="M427.0 220.0L429.5 224.0" stroke="#000" stroke-width="1.1" stroke-linecap="round"/><path d="M357.8 245.7 L377.8 243 L369 272 L364 268 Z" stroke="#000" stroke-width="1.65" fill="none" stroke-linecap="round" stroke-linejoin="round" /><path d="M359 248 L361.5 250 L360 253" stroke="#000" stroke-width="0.99" fill="none" stroke-linecap="round" stroke-linejoin="round" /><path d="M309.6 281.6 L298.9 312.7 L327.4 321.6" stroke="#000" stroke-width="1.65" fill="none" stroke-linecap="round" stroke-linejoin="round" /><path d="M324.7 305.6 L322 340 L320.2 370 L317.6 383.6" stroke="#000" stroke-width="1.65" fill="none" stroke-linecap="round" stroke-linejoin="round" /><path d="M437.7 273 L454.6 295 L433.5 315.4" stroke="#000" stroke-width="1.65" fill="none" stroke-linecap="round" stroke-linejoin="round" /><path d="M425 300 L432.3 340 Q438 352 438.6 357.8 Q438.5 361 437.6 362.4" stroke="#000" stroke-width="1.65" fill="none" stroke-linecap="round" stroke-linejoin="round" /><path d="M355.8 285.1 L369.2 309.1" stroke="#000" stroke-width="1.54" fill="none" stroke-linecap="round" stroke-linejoin="round" /><path d="M398.5 283.3 L382.5 307.4" stroke="#000" stroke-width="1.54" fill="none" stroke-linecap="round" stroke-linejoin="round" /><ellipse cx="376.3" cy="317.2" rx="9" ry="9.5" stroke="#000" stroke-width="1.5" fill="none"/><path d="M362 327.8 L395 327.8 L395.9 369.4 L363 369.4 Z" stroke="#000" stroke-width="1.54" fill="none" stroke-linecap="round" stroke-linejoin="round" /><path d="M362.5 337.6 L395 337.6" stroke="#000" stroke-width="1.32" fill="none" stroke-linecap="round" stroke-linejoin="round" /><path d="M370 346.5 L387 345 L387 363.4 L371 363.4 Z" stroke="#000" stroke-width="1.54" fill="none" stroke-linecap="round" stroke-linejoin="round" /><path d="M366.0 345.0L367.0 352.0" stroke="#000" stroke-width="0.8" stroke-linecap="round"/><path d="M377.0 340.0L375.0 344.0" stroke="#000" stroke-width="0.8" stroke-linecap="round"/><path d="M384.0 340.0L382.0 344.0" stroke="#000" stroke-width="0.8" stroke-linecap="round"/><path d="M390.0 341.0L388.0 350.0" stroke="#000" stroke-width="0.8" stroke-linecap="round"/><path d="M368.0 356.0L367.0 362.0" stroke="#000" stroke-width="0.8" stroke-linecap="round"/><path d="M390.0 355.0L389.0 360.0" stroke="#000" stroke-width="0.8" stroke-linecap="round"/><path d="M277.4 309.2 L297.4 337.2 L305.4 318.8" stroke="#000" stroke-width="1.65" fill="none" stroke-linecap="round" stroke-linejoin="round" /><path d="M275.8 326.8 L302.2 350 L315 329.2" stroke="#000" stroke-width="1.65" fill="none" stroke-linecap="round" stroke-linejoin="round" /><path d="M255 302.8 Q246 306 244.6 318 Q245 328 251 330.8 Q258 333 262 334 Q268 334 269.4 332.4" stroke="#000" stroke-width="1.65" fill="none" stroke-linecap="round" stroke-linejoin="round" /><path d="M255.8 306.8 Q262 308 270.2 304.4" stroke="#000" stroke-width="1.65" fill="none" stroke-linecap="round" stroke-linejoin="round" /><path d="M262.5 283 L263 279 L266.5 277.3 L269.5 279.5 L269 283" stroke="#000" stroke-width="1.43" fill="none" stroke-linecap="round" stroke-linejoin="round" /><path d="M258.5 284.5 L268.5 283.5 L268.8 305 L259.5 305.5 Z" fill="#000" stroke="#000" stroke-width="1"/><path d="M262.5 288.0L263.5 303.0" stroke="#999" stroke-width="0.7" stroke-linecap="round"/><path d="M265.5 287.0L266.0 300.0" stroke="#777" stroke-width="0.6" stroke-linecap="round"/><path d="M255.5 335.5 L264.5 335.5 L258 358.5 Z" fill="#111" stroke="#000" stroke-width="1.2" stroke-linejoin="round"/><path d="M259.0 339.0L261.0 343.0" stroke="#ccc" stroke-width="0.8" stroke-linecap="round"/><path d="M258.5 348.0L260.0 352.0" stroke="#aaa" stroke-width="0.7" stroke-linecap="round"/><path d="M452 297.6 L459.7 311.1 L469.8 291.7" stroke="#000" stroke-width="1.65" fill="none" stroke-linecap="round" stroke-linejoin="round" /><path d="M443.6 307.8 L458.8 329 L479.1 293.4" stroke="#000" stroke-width="1.65" fill="none" stroke-linecap="round" stroke-linejoin="round" /><path d="M470.7 287.5 Q472 270 480.8 262.9 Q486 261 492.7 262.9 Q504 264 503 272 Q501 280 489.3 280.7" stroke="#000" stroke-width="1.65" fill="none" stroke-linecap="round" stroke-linejoin="round" /><path d="M480.8 290 L493.5 290.8" stroke="#000" stroke-width="1.65" fill="none" stroke-linecap="round" stroke-linejoin="round" /><path d="M497.8 249.4 Q515 247 535 245.2" stroke="#000" stroke-width="1.76" fill="none" stroke-linecap="round" stroke-linejoin="round" /><path d="M496.9 246.8 L497 260.4" stroke="#000" stroke-width="1.65" fill="none" stroke-linecap="round" stroke-linejoin="round" /><path d="M493.5 284 L491 300 L489.3 323 Q512 321 535 321.3" stroke="#000" stroke-width="1.76" fill="none" stroke-linecap="round" stroke-linejoin="round" /><path d="M317.6 384 Q335 383 350 382.2 Q365 378 380 374.4 Q398 372.6 419.6 372 Q432 368 437.6 362.4" stroke="#000" stroke-width="1.65" fill="none" stroke-linecap="round" stroke-linejoin="round" /><path d="M325.4 387 Q328 404 332 420 Q342 410 353.6 404.4 Q364 401 374 400.2 Q386 398.5 398 398.4 Q408 398.5 416 399.6 Q423 403 426.8 410.4 Q427 404 428.6 402 Q434 394 435.8 386.4 Q436 378 435.2 369.6" stroke="#000" stroke-width="1.65" fill="none" stroke-linecap="round" stroke-linejoin="round" /><clipPath id="pc"><path d="M317.6 384 Q335 383 350 382.2 Q365 378 380 374.4 Q398 372.6 419.6 372 Q432 368 437.6 362.4 L435.2 369.6 Q436 378 435.8 386.4 Q434 394 428.6 402 Q427 404 426.8 410.4 Q423 403 416 399.6 Q408 398.5 398 398.4 Q386 398.5 374 400.2 Q364 401 353.6 404.4 Q342 410 332 420 Q328 404 325.4 387Z"/></clipPath><g clip-path="url(#pc)"><path d="M299.7 422.0L326.9 368.0" stroke="#000" stroke-width="1.5" stroke-linecap="round"/><path d="M301.6 420.0L326.5 370.0" stroke="#000" stroke-width="1.2" stroke-linecap="round"/><path d="M303.6 422.0L330.3 367.6" stroke="#000" stroke-width="1.5" stroke-linecap="round"/><path d="M305.3 420.0L330.2 369.6" stroke="#000" stroke-width="1.2" stroke-linecap="round"/><path d="M307.4 422.0L334.6 367.2" stroke="#000" stroke-width="1.5" stroke-linecap="round"/><path d="M312.0 422.0L337.9 366.8" stroke="#000" stroke-width="1.5" stroke-linecap="round"/><path d="M317.1 422.0L342.4 366.3" stroke="#000" stroke-width="1.5" stroke-linecap="round"/><path d="M318.8 420.0L343.7 368.3" stroke="#000" stroke-width="1.2" stroke-linecap="round"/><path d="M321.1 422.0L348.4 365.9" stroke="#000" stroke-width="1.5" stroke-linecap="round"/><path d="M324.9 422.0L352.1 365.5" stroke="#000" stroke-width="1.5" stroke-linecap="round"/><path d="M329.6 422.0L354.7 365.0" stroke="#000" stroke-width="1.5" stroke-linecap="round"/><path d="M331.4 420.0L356.3 367.0" stroke="#000" stroke-width="1.2" stroke-linecap="round"/><path d="M334.2 422.0L360.0 364.5" stroke="#000" stroke-width="1.5" stroke-linecap="round"/><path d="M338.5 422.0L365.8 364.1" stroke="#000" stroke-width="1.5" stroke-linecap="round"/><path d="M340.2 420.0L365.1 366.1" stroke="#000" stroke-width="1.2" stroke-linecap="round"/><path d="M342.5 422.0L369.1 363.8" stroke="#000" stroke-width="1.5" stroke-linecap="round"/><path d="M346.6 422.0L373.4 363.4" stroke="#000" stroke-width="1.5" stroke-linecap="round"/><path d="M347.7 420.0L372.6 365.4" stroke="#000" stroke-width="1.2" stroke-linecap="round"/><path d="M351.1 422.0L377.2 362.9" stroke="#000" stroke-width="1.5" stroke-linecap="round"/><path d="M354.3 422.0L379.7 362.5" stroke="#000" stroke-width="1.5" stroke-linecap="round"/><path d="M356.1 420.0L381.0 364.5" stroke="#000" stroke-width="1.2" stroke-linecap="round"/><path d="M358.6 422.0L385.8 362.1" stroke="#000" stroke-width="1.5" stroke-linecap="round"/><path d="M360.5 420.0L385.4 364.1" stroke="#000" stroke-width="1.2" stroke-linecap="round"/><path d="M364.0 422.0L391.0 361.6" stroke="#000" stroke-width="1.5" stroke-linecap="round"/><path d="M368.6 422.0L393.1 361.1" stroke="#000" stroke-width="1.5" stroke-linecap="round"/><path d="M372.0 422.0L398.7 360.8" stroke="#000" stroke-width="1.5" stroke-linecap="round"/><path d="M376.8 422.0L402.6 360.4" stroke="#000" stroke-width="1.5" stroke-linecap="round"/><path d="M377.9 420.0L402.8 362.4" stroke="#000" stroke-width="1.2" stroke-linecap="round"/><path d="M380.5 422.0L406.0 360.0" stroke="#000" stroke-width="1.5" stroke-linecap="round"/><path d="M383.7 422.0L410.2 359.6" stroke="#000" stroke-width="1.5" stroke-linecap="round"/><path d="M388.1 422.0L415.0 359.2" stroke="#000" stroke-width="1.5" stroke-linecap="round"/><path d="M391.9 422.0L418.8 358.8" stroke="#000" stroke-width="1.5" stroke-linecap="round"/><path d="M395.7 422.0L421.2 358.4" stroke="#000" stroke-width="1.5" stroke-linecap="round"/><path d="M400.0 422.0L426.8 358.0" stroke="#000" stroke-width="1.5" stroke-linecap="round"/><path d="M401.6 420.0L426.5 360.0" stroke="#000" stroke-width="1.2" stroke-linecap="round"/><path d="M403.0 422.0L428.4 357.7" stroke="#000" stroke-width="1.5" stroke-linecap="round"/><path d="M405.1 420.0L430.0 359.7" stroke="#000" stroke-width="1.2" stroke-linecap="round"/><path d="M408.9 422.0L433.2 357.2" stroke="#000" stroke-width="1.5" stroke-linecap="round"/><path d="M412.1 422.0L437.9 356.8" stroke="#000" stroke-width="1.5" stroke-linecap="round"/><path d="M416.5 422.0L441.8 356.3" stroke="#000" stroke-width="1.5" stroke-linecap="round"/><path d="M418.3 420.0L443.2 358.3" stroke="#000" stroke-width="1.2" stroke-linecap="round"/><path d="M420.4 422.0L446.9 356.0" stroke="#000" stroke-width="1.5" stroke-linecap="round"/><path d="M421.9 420.0L446.8 358.0" stroke="#000" stroke-width="1.2" stroke-linecap="round"/><path d="M423.4 422.0L449.4 355.6" stroke="#000" stroke-width="1.5" stroke-linecap="round"/><path d="M428.3 422.0L455.4 355.2" stroke="#000" stroke-width="1.5" stroke-linecap="round"/><path d="M432.4 422.0L458.6 354.7" stroke="#000" stroke-width="1.5" stroke-linecap="round"/><path d="M436.9 422.0L462.5 354.3" stroke="#000" stroke-width="1.5" stroke-linecap="round"/><path d="M438.2 420.0L463.1 356.3" stroke="#000" stroke-width="1.2" stroke-linecap="round"/></g><path d="M304.2 436.1L310.2 424.6" stroke="#000" stroke-width="1.5" stroke-linecap="round"/><path d="M313.1 434.3L319.1 422.8" stroke="#000" stroke-width="1.5" stroke-linecap="round"/><path d="M322.9 432.5L328.9 421.0" stroke="#000" stroke-width="1.5" stroke-linecap="round"/><path d="M334.5 430.7L340.5 419.2" stroke="#000" stroke-width="1.5" stroke-linecap="round"/><path d="M346.9 429.0L352.9 417.5" stroke="#000" stroke-width="1.5" stroke-linecap="round"/><path d="M361.2 426.3L367.2 414.8" stroke="#000" stroke-width="1.5" stroke-linecap="round"/><path d="M373.6 426.3L379.6 414.8" stroke="#000" stroke-width="1.5" stroke-linecap="round"/><path d="M390.5 421.9L396.5 410.4" stroke="#000" stroke-width="1.5" stroke-linecap="round"/><path d="M401.2 421.9L407.2 410.4" stroke="#000" stroke-width="1.5" stroke-linecap="round"/><path d="M412.8 419.2L418.8 407.7" stroke="#000" stroke-width="1.5" stroke-linecap="round"/><path d="M421.7 418.3L427.7 406.8" stroke="#000" stroke-width="1.5" stroke-linecap="round"/><path d="M428.8 416.5L434.8 405.0" stroke="#000" stroke-width="1.5" stroke-linecap="round"/><path d="M439.5 413.8L445.5 402.3" stroke="#000" stroke-width="1.5" stroke-linecap="round"/><path d="M446.6 413.0L452.6 401.5" stroke="#000" stroke-width="1.5" stroke-linecap="round"/></svg></div><div class="a" id="dlg" style="left:535px;top:192.5px;width:347.8px;height:357.5px;background:#ececec;border-radius:4px 4px 0 0;box-shadow:0 6px 22px rgba(0,0,0,0.35),0 0 0 0.5px rgba(0,0,0,0.25);font-size:6.6px;color:#222">
 <div class="a" style="left:0;top:0;width:347.8px;height:20px;background:linear-gradient(180deg,#e9e7e9,#d6d4d6);border-bottom:0.5px solid #bdbdbd;border-radius:4px 4px 0 0"></div>
 <div class="a" style="left:6.8px;top:7.2px;width:6.6px;height:6.6px;border-radius:50%;background:#fc5c57;border:0.5px solid #e2463f"></div>
 <div class="a" style="left:17.2px;top:7.2px;width:6.6px;height:6.6px;border-radius:50%;background:#f5bd2f;border:0.5px solid #dfa123"></div>
 <div class="a" style="left:27.5px;top:7.2px;width:6.6px;height:6.6px;border-radius:50%;background:#d3d3d3;border:0.5px solid #c2c2c2"></div>
 <div class="a" style="left:40.7px;top:4.8px;width:29px;height:11.2px;background:#fafafa;border-radius:2px;box-shadow:0 0 0 0.5px #c5c5c5,0 0.5px 0.5px #aaa"></div>
 <div class="a" style="left:54.6px;top:4.8px;width:0.5px;height:11.2px;background:#ccc"></div>
 <svg style="left:46px;top:7px" width="5" height="7" viewBox="0 0 5 7"><path d="M4 0.5 L1 3.5 L4 6.5" stroke="#555" stroke-width="0.9" fill="none"/></svg>
 <svg style="left:60px;top:7px" width="5" height="7" viewBox="0 0 5 7"><path d="M1 0.5 L4 3.5 L1 6.5" stroke="#aaa" stroke-width="0.9" fill="none"/></svg>
 <div class="a" style="left:75.2px;top:4.7px;width:16.8px;height:11.4px;background:#fafafa;border-radius:2px;box-shadow:0 0 0 0.5px #c5c5c5,0 0.5px 0.5px #aaa"></div>
 <svg style="left:80px;top:7.5px" width="7" height="6" viewBox="0 0 7 6"><path d="M0.5 0 V6 M2 0 V6 M3.5 0 V6 M5 0 V6 M6.5 0 V6" stroke="#666" stroke-width="0.7" stroke-dasharray="1.2 0.5"/></svg>
 <span class="t" style="left:151px;top:6px;font-size:7.4px;color:#4a4a4a;line-height:9px">Wacom 數位板</span>
 <div class="a" style="left:260.6px;top:4.1px;width:84px;height:12.9px;background:#fff;border-radius:3px;box-shadow:0 0 0 1.5px #7fb0ef,inset 0 0 0 0.5px #6a9de0"></div>
 <svg style="left:264px;top:7px" width="7" height="7" viewBox="0 0 7 7"><circle cx="2.8" cy="2.8" r="2.2" stroke="#777" stroke-width="0.8" fill="none"/><path d="M4.4 4.4 L6.5 6.5" stroke="#777" stroke-width="0.9"/></svg>
 <div class="a" style="left:272px;top:7px;width:0.6px;height:7px;background:#222"></div>
 <span class="t" style="left:273px;top:6px;font-size:6.6px;color:#999;line-height:9px">搜尋</span>

 <!-- rows -->
 <span class="t" style="left:34px;top:36px;font-size:7px;line-height:9px;color:#222;font-weight:bold;width:22px;text-align:right">裝置:</span>
 <span class="t" style="left:28px;top:70px;font-size:7px;line-height:9px;color:#222;font-weight:bold;width:28px;text-align:right">工具:</span>
 <span class="t" style="left:10px;top:103.5px;font-size:7px;line-height:9px;color:#222;font-weight:bold;width:46px;text-align:right">應用程式:</span>

 <div class="a" style="left:63.3px;top:25.5px;width:10.7px;height:29.4px;background:#e8e8e8;border-radius:2px;box-shadow:0 0 0 0.5px #d0d0d0"></div>
 <div class="a" style="left:76.3px;top:25.5px;width:213px;height:29.4px;background:#fff;border-radius:2px;box-shadow:0 0 0 0.5px #cfcfcf"></div>
 <div class="a" style="left:292px;top:25.5px;width:10.5px;height:29.4px;background:#e8e8e8;border-radius:2px;box-shadow:0 0 0 0.5px #d0d0d0"></div>
 <svg style="left:67px;top:38px" width="4" height="5" viewBox="0 0 4 5"><path d="M3 0.5 L1 2.5 L3 4.5" stroke="#aaa" stroke-width="0.7" fill="none"/></svg>
 <svg style="left:296px;top:38px" width="4" height="5" viewBox="0 0 4 5"><path d="M1 0.5 L3 2.5 L1 4.5" stroke="#aaa" stroke-width="0.7" fill="none"/></svg>
 <div class="a" style="left:306.4px;top:40.8px;width:10.6px;height:10.7px;background:#f4f4f4;border-radius:1.5px;box-shadow:0 0 0 0.5px #c8c8c8"></div>
 <div class="a" style="left:309.5px;top:45.7px;width:4.5px;height:1px;background:#888"></div>

 <div class="a" style="left:63.3px;top:59.1px;width:10.7px;height:29.1px;background:#e8e8e8;border-radius:2px;box-shadow:0 0 0 0.5px #d0d0d0"></div>
 <div class="a" style="left:76.3px;top:59.1px;width:213px;height:29.1px;background:#fff;border-radius:2px;box-shadow:0 0 0 0.5px #cfcfcf"></div>
 <div class="a" style="left:292px;top:59.1px;width:10.5px;height:29.1px;background:#f2f2f2;border-radius:2px;box-shadow:0 0 0 0.5px #b8b8b8"></div>
 <svg style="left:67px;top:71.5px" width="4" height="5" viewBox="0 0 4 5"><path d="M3 0.5 L1 2.5 L3 4.5" stroke="#aaa" stroke-width="0.7" fill="none"/></svg>
 <svg style="left:296px;top:71.5px" width="4" height="5" viewBox="0 0 4 5"><path d="M1 0.5 L3 2.5 L1 4.5" stroke="#222" stroke-width="1" fill="none"/></svg>
 <div class="a" style="left:306.4px;top:71px;width:10.6px;height:10.7px;background:#efefef;border-radius:1.5px;box-shadow:0 0 0 0.5px #d4d4d4"></div>
 <div class="a" style="left:309.5px;top:76px;width:4.5px;height:1px;background:#aaa"></div>

 <div class="a" style="left:63.3px;top:93px;width:10.7px;height:28.8px;background:#e8e8e8;border-radius:2px;box-shadow:0 0 0 0.5px #c8c8c8"></div>
 <div class="a" style="left:76.3px;top:93px;width:213px;height:28.8px;background:#fff;border-radius:2px;box-shadow:0 0 0 0.5px #cfcfcf"></div>
 <div class="a" style="left:292px;top:93px;width:10.5px;height:28.8px;background:#e8e8e8;border-radius:2px;box-shadow:0 0 0 0.5px #d0d0d0"></div>
 <svg style="left:67px;top:105px" width="4" height="5" viewBox="0 0 4 5"><path d="M3 0.5 L1 2.5 L3 4.5" stroke="#222" stroke-width="1" fill="none"/></svg>
 <svg style="left:296px;top:105px" width="4" height="5" viewBox="0 0 4 5"><path d="M1 0.5 L3 2.5 L1 4.5" stroke="#aaa" stroke-width="0.7" fill="none"/></svg>
 <div class="a" style="left:306.4px;top:93.5px;width:10.6px;height:10px;background:#f7f7f7;border-radius:1.5px;box-shadow:0 0 0 0.5px #b0b0b0"></div>
 <div class="a" style="left:309.5px;top:98px;width:4.5px;height:1.1px;background:#222"></div>
 <div class="a" style="left:311.2px;top:96.3px;width:1.1px;height:4.5px;background:#222"></div>
 <div class="a" style="left:306.4px;top:107.9px;width:10.6px;height:10.1px;background:#f7f7f7;border-radius:1.5px;box-shadow:0 0 0 0.5px #b0b0b0"></div>
 <div class="a" style="left:309.5px;top:112.5px;width:4.5px;height:1.1px;background:#222"></div>

 <!-- row1 content -->
 <div class="a" style="left:89px;top:27.5px;width:8px;height:16px;background:#fff;border:0.5px solid #ddd"></div>
 <div class="a" style="left:89.5px;top:30.5px;width:7.5px;height:10.5px;background:#2e2e2e"></div>
 <div class="a" style="left:97px;top:27.5px;width:8px;height:16.5px;background:#27c93f;border-radius:1px;border:0.5px solid #1a7a2a"></div>
 <div class="a" style="left:99px;top:26.8px;width:4px;height:1px;background:#333"></div>
 <div class="a" style="left:78px;top:46.1px;width:39px;height:7.7px;background:#1a63d6;border-radius:4px;color:#fff;font-size:6.2px;line-height:7.7px;text-align:center">Intuos Pro M</div>

 <!-- row2 content -->
 <div class="a" style="left:79px;top:61.9px;width:17.2px;height:16.1px;background:radial-gradient(circle at 30% 10%,#666 0%,#2b2b2b 40%,#1e1e1e 100%)"></div>
 <svg style="left:86.5px;top:69px" width="10" height="10" viewBox="0 0 10 10"><circle cx="5" cy="5" r="4.5" fill="#f2f2f2"/><circle cx="5" cy="5" r="1.2" fill="#333"/><path d="M5 0.5V9.5M0.5 5H9.5M1.8 1.8L8.2 8.2M8.2 1.8L1.8 8.2" stroke="#555" stroke-width="0.6"/></svg>
 <div class="a" style="left:78px;top:80.5px;width:18.8px;height:7px;background:#1a63d6;border-radius:4px;color:#fff;font-size:5.6px;line-height:7px;text-align:center">功能</div>
 <svg style="left:102.5px;top:62px" width="9" height="16" viewBox="0 0 9 16"><circle cx="3" cy="1.5" r="1.2" stroke="#333" stroke-width="0.5" fill="#eee"/><path d="M2.2 3 H3.8 V8 Q7.5 8 8 11 V15 H2 Q0.5 13 0.8 10 Q1.3 8.8 2.2 8.5Z" fill="#1e1e1e"/></svg>
 <span class="t" style="left:103px;top:80px;font-size:5.6px;line-height:7px;color:#333">觸控</span>
 <div class="a" style="left:119px;top:63px;width:0.8px;height:20px;background:#c8c8c8"></div>
 <svg style="left:129px;top:62px" width="16" height="16" viewBox="0 0 16 16"><path d="M1 15 L15.5 0.8" stroke="#111" stroke-width="1.3" stroke-linecap="round"/></svg>
 <span class="t" style="left:126px;top:80px;font-size:5.6px;line-height:7px;color:#444">Pro Pen 2</span>

 <!-- row3 content -->
 <svg style="left:89px;top:95.5px" width="17" height="17" viewBox="0 0 17 17"><path d="M2 4 L11 1 L15 12 L6 15Z" fill="#e4e4e4" stroke="#bbb" stroke-width="0.5"/><path d="M1 5 L10 3 L13 14 L4 16Z" fill="#f4f4f4" stroke="#bbb" stroke-width="0.5"/><path d="M4 14 L9 5 L12 13 M6 10 L11 10" stroke="#e0561c" stroke-width="1.3" fill="none"/><path d="M8.5 9 L14 5" stroke="#f2b33d" stroke-width="1.5"/></svg>
 <span class="t" style="left:81.8px;top:114px;font-size:5.6px;line-height:7px;color:#333;transform:scaleX(0.9);transform-origin:0 50%">其它所有程式</span>
 <div class="a" style="left:120.4px;top:97px;width:0.8px;height:20px;background:#c8c8c8"></div>
 <div class="a" style="left:153px;top:96.5px;width:15.5px;height:14px;background:#001d34;border:1px solid #31a8ff;box-shadow:0 0 0 0.5px #bbb;color:#31a8ff;font-size:7.5px;line-height:12px;text-align:center;font-weight:bold">Ps</div>
 <div class="a" style="left:123.5px;top:114.2px;width:74px;height:7px;background:#1a63d6;border-radius:4px;color:#fff;font-size:5.6px;line-height:7px;text-align:center">Adobe Photoshop CC 2017</div>

 <!-- tabs + panel -->
 <div class="a" style="left:19.4px;top:131.7px;width:309px;height:201.4px;background:#e2e2e2;border-radius:3px;box-shadow:inset 0 0 0 0.5px #d6d6d6"></div>
 <div class="a" style="left:117.6px;top:126.2px;width:112.7px;height:11.2px;background:#fff;border-radius:2.5px;box-shadow:0 0 0 0.5px #c6c6c6,0 0.5px 0.5px #aaa"></div>
 <div class="a" style="left:117.6px;top:126.2px;width:33.4px;height:11.2px;background:linear-gradient(180deg,#5aa2fb,#1b74f0);border-radius:2.5px 0 0 2.5px;color:#fff;font-size:6.8px;line-height:11.2px;text-align:center">快速鍵</div>
 <span class="t" style="left:151px;top:126.2px;width:31.7px;font-size:6.8px;line-height:11.2px;text-align:center;color:#222">觸控環</span>
 <div class="a" style="left:182.7px;top:127px;width:0.5px;height:9.5px;background:#d0d0d0"></div>
 <span class="t" style="left:183px;top:126.2px;width:47px;font-size:6.8px;line-height:11.2px;text-align:center;color:#222">螢幕控制器</span>
<div class="a" style="left:29.7px;top:152.5px;width:90.7px;height:11.0px;background:#fff;border-radius:2.5px;box-shadow:0 0 0 0.5px #c4c4c4,0 0.6px 0.6px #a8a8a8;font-size:6.8px;line-height:11.0px;padding-left:4px;color:#222;overflow:hidden">Wacom 桌面控制中心</div>
<div class="a" style="left:111.8px;top:152.5px;width:8.6px;height:11.0px;background:linear-gradient(180deg,#68abfb,#1a6ff0);border-radius:0 2.5px 2.5px 0"></div>
<svg style="left:114.1px;top:156.7px" width="4" height="3" viewBox="0 0 4 3"><path d="M0.5 0.5 L2 2 L3.5 0.5" stroke="#fff" stroke-width="0.8" fill="none"/></svg>
<div class="a" style="left:29.7px;top:174.2px;width:90.7px;height:10.8px;background:#fff;border-radius:2.5px;box-shadow:0 0 0 0.5px #c4c4c4,0 0.6px 0.6px #a8a8a8;font-size:6.8px;line-height:10.8px;padding-left:4px;color:#222;overflow:hidden">設定</div>
<div class="a" style="left:111.8px;top:174.2px;width:8.6px;height:10.8px;background:linear-gradient(180deg,#68abfb,#1a6ff0);border-radius:0 2.5px 2.5px 0"></div>
<svg style="left:114.1px;top:178.3px" width="4" height="3" viewBox="0 0 4 3"><path d="M0.5 0.5 L2 2 L3.5 0.5" stroke="#fff" stroke-width="0.8" fill="none"/></svg>
<div class="a" style="left:29.7px;top:195.3px;width:90.7px;height:10.6px;background:#fff;border-radius:2.5px;box-shadow:0 0 0 0.5px #c4c4c4,0 0.6px 0.6px #a8a8a8;font-size:6.8px;line-height:10.6px;padding-left:4px;color:#222;overflow:hidden">鍵盤...</div>
<div class="a" style="left:111.8px;top:195.3px;width:8.6px;height:10.6px;background:linear-gradient(180deg,#68abfb,#1a6ff0);border-radius:0 2.5px 2.5px 0"></div>
<svg style="left:114.1px;top:199.3px" width="4" height="3" viewBox="0 0 4 3"><path d="M0.5 0.5 L2 2 L3.5 0.5" stroke="#fff" stroke-width="0.8" fill="none"/></svg>
<span class="t" style="left:34.0px;top:207.0px;font-size:6.2px;line-height:8px;color:#111;-webkit-text-stroke:0.15px #111">Shift Tab</span>
<div class="a" style="left:29.7px;top:216.5px;width:90.7px;height:10.8px;background:#fff;border-radius:2.5px;box-shadow:0 0 0 0.5px #c4c4c4,0 0.6px 0.6px #a8a8a8;font-size:6.8px;line-height:10.8px;padding-left:4px;color:#222;overflow:hidden">鍵盤...</div>
<div class="a" style="left:111.8px;top:216.5px;width:8.6px;height:10.8px;background:linear-gradient(180deg,#68abfb,#1a6ff0);border-radius:0 2.5px 2.5px 0"></div>
<svg style="left:114.1px;top:220.6px" width="4" height="3" viewBox="0 0 4 3"><path d="M0.5 0.5 L2 2 L3.5 0.5" stroke="#fff" stroke-width="0.8" fill="none"/></svg>
<span class="t" style="left:34.0px;top:228.5px;font-size:6.2px;line-height:8px;color:#111;-webkit-text-stroke:0.15px #111">向後一步</span>
<div class="a" style="left:217.5px;top:191.8px;width:90.7px;height:11.2px;background:#fff;border-radius:2.5px;box-shadow:0 0 0 0.5px #c4c4c4,0 0.6px 0.6px #a8a8a8;font-size:6.8px;line-height:11.2px;padding-left:4px;color:#222;overflow:hidden">修正器...</div>
<div class="a" style="left:299.6px;top:191.8px;width:8.6px;height:11.2px;background:linear-gradient(180deg,#68abfb,#1a6ff0);border-radius:0 2.5px 2.5px 0"></div>
<svg style="left:301.9px;top:196.1px" width="4" height="3" viewBox="0 0 4 3"><path d="M0.5 0.5 L2 2 L3.5 0.5" stroke="#fff" stroke-width="0.8" fill="none"/></svg>
<span class="t" style="left:222.0px;top:203.5px;font-size:6.2px;line-height:8px;color:#111;-webkit-text-stroke:0.15px #111">Opt</span>
<div class="a" style="left:217.5px;top:213.1px;width:90.7px;height:11.2px;background:#fff;border-radius:2.5px;box-shadow:0 0 0 0.5px #c4c4c4,0 0.6px 0.6px #a8a8a8;font-size:6.8px;line-height:11.2px;padding-left:4px;color:#222;overflow:hidden">修正器...</div>
<div class="a" style="left:299.6px;top:213.1px;width:8.6px;height:11.2px;background:linear-gradient(180deg,#68abfb,#1a6ff0);border-radius:0 2.5px 2.5px 0"></div>
<svg style="left:301.9px;top:217.4px" width="4" height="3" viewBox="0 0 4 3"><path d="M0.5 0.5 L2 2 L3.5 0.5" stroke="#fff" stroke-width="0.8" fill="none"/></svg>
<span class="t" style="left:222.0px;top:224.5px;font-size:6.2px;line-height:8px;color:#111;-webkit-text-stroke:0.15px #111">指令</span>
<div class="a" style="left:217.5px;top:234.5px;width:90.7px;height:11.0px;background:#fff;border-radius:2.5px;box-shadow:0 0 0 0.5px #c4c4c4,0 0.6px 0.6px #a8a8a8;font-size:6.8px;line-height:11.0px;padding-left:4px;color:#222;overflow:hidden">無效</div>
<div class="a" style="left:299.6px;top:234.5px;width:8.6px;height:11.0px;background:linear-gradient(180deg,#68abfb,#1a6ff0);border-radius:0 2.5px 2.5px 0"></div>
<svg style="left:301.9px;top:238.7px" width="4" height="3" viewBox="0 0 4 3"><path d="M0.5 0.5 L2 2 L3.5 0.5" stroke="#fff" stroke-width="0.8" fill="none"/></svg>
<div class="a" style="left:217.5px;top:255.8px;width:90.7px;height:11.2px;background:#fff;border-radius:2.5px;box-shadow:0 0 0 0.5px #c4c4c4,0 0.6px 0.6px #a8a8a8;font-size:6.8px;line-height:11.2px;padding-left:4px;color:#222;overflow:hidden">鍵盤...</div>
<div class="a" style="left:299.6px;top:255.8px;width:8.6px;height:11.2px;background:linear-gradient(180deg,#68abfb,#1a6ff0);border-radius:0 2.5px 2.5px 0"></div>
<svg style="left:301.9px;top:260.1px" width="4" height="3" viewBox="0 0 4 3"><path d="M0.5 0.5 L2 2 L3.5 0.5" stroke="#fff" stroke-width="0.8" fill="none"/></svg>
<span class="t" style="left:222.0px;top:268.0px;font-size:6.2px;line-height:8px;color:#111;-webkit-text-stroke:0.15px #111">Space</span>
<div class="a" style="left:149.5px;top:145.0px;width:38.5px;height:135.2px;background:linear-gradient(90deg,#2e2e2e,#383838 50%,#303030);box-shadow:0 0 0 0.6px #fafafa"></div>
<div class="a" style="left:161.4px;top:150.0px;width:13.8px;height:40.5px;background:#383838;border-radius:2.5px;box-shadow:0 0 0 0.6px #262626"></div>
<div class="a" style="left:161.4px;top:160.1px;width:13.8px;height:0.7px;background:#2a2a2a"></div>
<div class="a" style="left:161.4px;top:170.2px;width:13.8px;height:0.7px;background:#2a2a2a"></div>
<div class="a" style="left:161.4px;top:180.4px;width:13.8px;height:0.7px;background:#2a2a2a"></div>
<div class="a" style="left:161.0px;top:234.0px;width:13.8px;height:40.5px;background:#383838;border-radius:2.5px;box-shadow:0 0 0 0.6px #262626"></div>
<div class="a" style="left:161.0px;top:244.1px;width:13.8px;height:0.7px;background:#2a2a2a"></div>
<div class="a" style="left:161.0px;top:254.2px;width:13.8px;height:0.7px;background:#2a2a2a"></div>
<div class="a" style="left:161.0px;top:264.4px;width:13.8px;height:0.7px;background:#2a2a2a"></div>
<div class="a" style="left:154.3px;top:198.5px;width:28.8px;height:28.8px;border-radius:50%;background:radial-gradient(circle at 50% 40%,#3c3c3c,#242424 70%,#1a1a1a);box-shadow:0 0 0 0.5px #1a1a1a"></div>
<div class="a" style="left:162.8px;top:207.0px;width:11.8px;height:11.8px;border-radius:50%;background:radial-gradient(circle at 50% 35%,#444,#262626);box-shadow:0 0 0 0.5px #151515"></div>
<svg style="left:0;top:0" width="348" height="357" viewBox="0 0 348 357"><path d="M123.5 157.5L156.1 155.8" stroke="#6a6a6a" stroke-width="1.7" stroke-linecap="round"/><path d="M123.5 157.5L156.1 155.8" stroke="#c8c8c8" stroke-width="0.8" stroke-linecap="round"/><circle cx="156.1" cy="155.8" r="1.2" fill="#d8d8d8"/><path d="M123.5 178.8L156.1 165.5" stroke="#6a6a6a" stroke-width="1.7" stroke-linecap="round"/><path d="M123.5 178.8L156.1 165.5" stroke="#c8c8c8" stroke-width="0.8" stroke-linecap="round"/><circle cx="156.1" cy="165.5" r="1.2" fill="#d8d8d8"/><path d="M123.5 199.5L156.1 176.7" stroke="#6a6a6a" stroke-width="1.7" stroke-linecap="round"/><path d="M123.5 199.5L156.1 176.7" stroke="#c8c8c8" stroke-width="0.8" stroke-linecap="round"/><circle cx="156.1" cy="176.7" r="1.2" fill="#d8d8d8"/><path d="M123.5 220.5L156.1 185.7" stroke="#6a6a6a" stroke-width="1.7" stroke-linecap="round"/><path d="M123.5 220.5L156.1 185.7" stroke="#c8c8c8" stroke-width="0.8" stroke-linecap="round"/><circle cx="156.1" cy="185.7" r="1.2" fill="#d8d8d8"/><path d="M213.5 197.7L180.5 238.3" stroke="#6a6a6a" stroke-width="1.7" stroke-linecap="round"/><path d="M213.5 197.7L180.5 238.3" stroke="#c8c8c8" stroke-width="0.8" stroke-linecap="round"/><circle cx="180.5" cy="238.3" r="1.2" fill="#d8d8d8"/><path d="M213.5 218.8L180.5 248.5" stroke="#6a6a6a" stroke-width="1.7" stroke-linecap="round"/><path d="M213.5 218.8L180.5 248.5" stroke="#c8c8c8" stroke-width="0.8" stroke-linecap="round"/><circle cx="180.5" cy="248.5" r="1.2" fill="#d8d8d8"/><path d="M213.5 240.0L180.5 258.5" stroke="#6a6a6a" stroke-width="1.7" stroke-linecap="round"/><path d="M213.5 240.0L180.5 258.5" stroke="#c8c8c8" stroke-width="0.8" stroke-linecap="round"/><circle cx="180.5" cy="258.5" r="1.2" fill="#d8d8d8"/><path d="M213.5 261.1L180.5 268.7" stroke="#6a6a6a" stroke-width="1.7" stroke-linecap="round"/><path d="M213.5 261.1L180.5 268.7" stroke="#c8c8c8" stroke-width="0.8" stroke-linecap="round"/><circle cx="180.5" cy="268.7" r="1.2" fill="#d8d8d8"/></svg>
<div class="a" style="left:29.3px;top:286.0px;width:7.6px;height:7.6px;background:linear-gradient(180deg,#5ba4fb,#1b70ef);border-radius:1.8px"></div>
<svg style="left:30.5px;top:287.5px" width="5" height="5" viewBox="0 0 5 5"><path d="M0.6 2.5 L2 4 L4.5 0.6" stroke="#fff" stroke-width="0.9" fill="none"/></svg>
<span class="t" style="left:39.0px;top:285.5px;font-size:6.8px;line-height:8.5px;color:#222">顯示快速檢視</span>
<div class="a" style="left:271.5px;top:298.0px;width:42.2px;height:10.9px;background:#fff;border-radius:2.5px;box-shadow:0 0 0 0.5px #c4c4c4,0 0.6px 0.6px #a8a8a8;font-size:6.8px;line-height:10.9px;text-align:center;color:#222">預設值</div>
<div class="a" style="left:19.5px;top:338.1px;width:39.9px;height:10.4px;background:#fff;border-radius:2.5px;box-shadow:0 0 0 0.5px #c4c4c4,0 0.6px 0.6px #a8a8a8;font-size:6.8px;line-height:10.4px;text-align:center;color:#222">關於</div>
<div class="a" style="left:66.5px;top:338.1px;width:40.9px;height:10.4px;background:#fff;border-radius:2.5px;box-shadow:0 0 0 0.5px #c4c4c4,0 0.6px 0.6px #a8a8a8;font-size:6.8px;line-height:10.4px;text-align:center;color:#222">選項...</div>
<div class="a" style="left:308.4px;top:338.5px;width:10.6px;height:10.6px;border-radius:50%;background:#fff;box-shadow:0 0 0 0.5px #c0c0c0,0 0.5px 0.5px #999;color:#3a86f0;font-size:7.5px;line-height:10.6px;text-align:center;font-weight:bold">?</div>
</div>
</body></html>
